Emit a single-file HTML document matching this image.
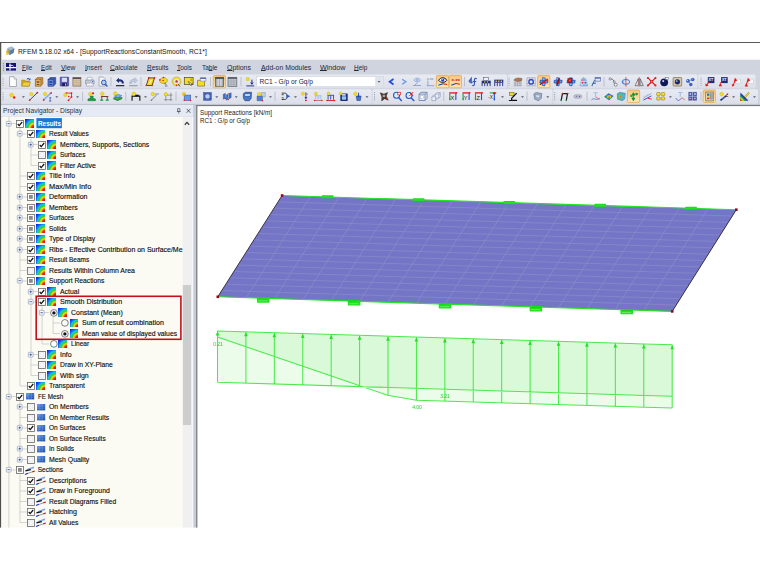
<!DOCTYPE html>
<html><head><meta charset="utf-8"><title>RFEM 5.18.02 x64 - [SupportReactionsConstantSmooth, RC1*]</title>
<style>
html,body{margin:0;padding:0;background:#fff;}
body{width:760px;height:570px;position:relative;overflow:hidden;font-family:"Liberation Sans",sans-serif;}
.a{position:absolute;}
.t{position:absolute;white-space:pre;transform-origin:0 50%;display:block;}
u{text-decoration:underline;text-decoration-thickness:0.5px;text-underline-offset:0.4px;}
.cb{position:absolute;width:6.4px;height:6.4px;border:0.7px solid #555;background:#fff;box-sizing:content-box;}
.ic{position:absolute;width:8.8px;height:8.8px;}
.res{background:radial-gradient(circle farthest-corner at 100% 100%,#dc0c0c 0%,#e82018 18%,#f6dc00 34%,#38cc30 48%,#10ccd0 61%,#1070f8 74%,#0828e8 92%,#0820d0 100%);}
svg{position:absolute;overflow:visible;}
</style></head><body>

<svg style="left:0;top:0" width="760" height="570" viewBox="0 0 760 570"><rect x="0.00" y="42.00" width="760.00" height="1.00" fill="#5a5a5a"/><rect x="0.00" y="42.00" width="1.25" height="485.60" fill="#505050"/><rect x="1.00" y="59.70" width="759.00" height="14.30" fill="#cfd4df"/><rect x="1.00" y="74.00" width="759.00" height="30.60" fill="#cfd4df"/><rect x="1.00" y="104.10" width="759.00" height="0.90" fill="#bcc1ce"/><rect x="1.00" y="105.00" width="195.00" height="11.40" fill="#e6eaf4"/><rect x="193.20" y="105.00" width="2.90" height="422.60" fill="#c5cbdb"/><rect x="1.00" y="116.20" width="192.20" height="0.60" fill="#cdd3e0"/><rect x="1.00" y="116.80" width="1.00" height="410.80" fill="#e4e8f2"/><rect x="2.00" y="116.80" width="180.60" height="410.80" fill="#fbfbf4"/><rect x="182.60" y="116.80" width="9.50" height="410.80" fill="#f0f0f0"/><rect x="192.10" y="116.80" width="1.10" height="410.80" fill="#f6f7fb"/><rect x="182.90" y="285.00" width="8.15" height="140.00" fill="#cdcdcd"/><rect x="196.10" y="105.00" width="1.30" height="422.60" fill="#7a7a7a"/><rect x="196.10" y="105.00" width="563.90" height="1.10" fill="#7a7a7a"/><rect x="36.40" y="118.10" width="25.50" height="10.10" fill="#1a77d4"/></svg>





<svg style="left:5px;top:46px" width="10" height="10" viewBox="0 0 10 10"><path d="M2.5 2.2 L6.5 0.6 L9.4 2.6 L8.6 6.8 L4.6 9 L1.6 7 Z" fill="#7c95b8"/><path d="M2.5 2.2 L6.5 0.6 L9.4 2.6 L5.4 4.4 Z" fill="#a9bcd6"/><path d="M5.4 4.4 L9.4 2.6 L8.6 6.8 L4.6 9 Z" fill="#5e7aa3"/><path d="M3.6 4.6 C1.6 4.2 0.8 6.2 2.6 6.6 C4 7 3.4 8.6 1.2 7.8" fill="none" stroke="#e8c020" stroke-width="1.3"/></svg>
<span class="t" style="left:17.80px;top:47.74px;font-size:6.6px;line-height:7.92px;color:#151515;transform:scaleX(1.0180);">RFEM 5.18.02 x64 - [SupportReactionsConstantSmooth, RC1*]</span>
<svg style="left:0;top:0" width="10" height="80"><path d="M3.4 63 v8.4" stroke="#7a8090" stroke-width="0.9" stroke-dasharray="0.9 0.9"/></svg>
<svg style="left:6.2px;top:63.2px" width="10" height="7.6" viewBox="0 0 10 7.6"><rect width="10" height="7.6" fill="#15156e"/><path d="M0 4.6 H10 M4 0.6 V7.6" stroke="#fff" stroke-width="1.1"/><path d="M3 2.4 H6.4 L7.6 3.4" stroke="#fff" stroke-width="0.9" fill="none"/></svg>
<span class="t" style="left:21.75px;top:64.10px;font-size:6.5px;line-height:7.80px;color:#22273a;transform:scaleX(0.9776);"><u>F</u>ile</span>
<span class="t" style="left:41.25px;top:64.10px;font-size:6.5px;line-height:7.80px;color:#22273a;transform:scaleX(0.9596);"><u>E</u>dit</span>
<span class="t" style="left:61.25px;top:64.10px;font-size:6.5px;line-height:7.80px;color:#22273a;transform:scaleX(1.0369);"><u>V</u>iew</span>
<span class="t" style="left:84.50px;top:64.10px;font-size:6.5px;line-height:7.80px;color:#22273a;transform:scaleX(1.0298);"><u>I</u>nsert</span>
<span class="t" style="left:110.00px;top:64.10px;font-size:6.5px;line-height:7.80px;color:#22273a;transform:scaleX(1.0218);"><u>C</u>alculate</span>
<span class="t" style="left:146.50px;top:64.10px;font-size:6.5px;line-height:7.80px;color:#22273a;transform:scaleX(0.9914);"><u>R</u>esults</span>
<span class="t" style="left:177.00px;top:64.10px;font-size:6.5px;line-height:7.80px;color:#22273a;transform:scaleX(0.9877);"><u>T</u>ools</span>
<span class="t" style="left:201.90px;top:64.10px;font-size:6.5px;line-height:7.80px;color:#22273a;">Ta<u>b</u>le</span>
<span class="t" style="left:227.30px;top:64.10px;font-size:6.5px;line-height:7.80px;color:#22273a;transform:scaleX(1.0689);"><u>O</u>ptions</span>
<span class="t" style="left:260.50px;top:64.10px;font-size:6.5px;line-height:7.80px;color:#22273a;transform:scaleX(1.0614);"><u>A</u>dd-on Modules</span>
<span class="t" style="left:320.00px;top:64.10px;font-size:6.5px;line-height:7.80px;color:#22273a;transform:scaleX(1.1027);"><u>W</u>indow</span>
<span class="t" style="left:354.25px;top:64.10px;font-size:6.5px;line-height:7.80px;color:#22273a;transform:scaleX(0.9907);"><u>H</u>elp</span>
<svg style="left:0;top:0" width="760" height="110" viewBox="0 0 760 110"><defs><linearGradient id="tbg" x1="0" y1="0" x2="0" y2="1"><stop offset="0" stop-color="#e8ebf2"/><stop offset="1" stop-color="#dcdfe9"/></linearGradient><linearGradient id="hlg" x1="0" y1="0" x2="0" y2="1"><stop offset="0" stop-color="#f8c682"/><stop offset="0.5" stop-color="#fbd797"/><stop offset="1" stop-color="#fdebb2"/></linearGradient></defs><rect x="1.5" y="74.4" width="505.5" height="13.799999999999997" rx="1.6" fill="url(#tbg)"/><rect x="508" y="74.4" width="189.39999999999998" height="13.799999999999997" rx="1.6" fill="url(#tbg)"/><rect x="698.3" y="74.4" width="57.30000000000007" height="13.799999999999997" rx="1.6" fill="url(#tbg)"/><rect x="1.5" y="89.2" width="370.1" height="14.599999999999994" rx="1.6" fill="url(#tbg)"/><rect x="372.6" y="89.2" width="179.79999999999995" height="14.599999999999994" rx="1.6" fill="url(#tbg)"/><rect x="553.4" y="89.2" width="204.60000000000002" height="14.599999999999994" rx="1.6" fill="url(#tbg)"/><rect x="256.8" y="76.5" width="126.4" height="10.2" fill="#fff" stroke="#c2c8d6" stroke-width="0.5"/><rect x="375.2" y="77" width="7.6" height="9.2" fill="#dfe3ec"/><path d="M377.50 81.10 h3 l-1.5 1.7 z" fill="#5a6070"/><path d="M3.00 77.60 v8.4" stroke="#8e94a4" stroke-width="0.9" stroke-dasharray="0.9 0.9"/><g transform="translate(8.40 77.10)"><path d="M1.2 -0.4 H5.6 L8 2 V9.4 H1.2 Z" fill="#fdfdfd" stroke="#8a8f98" stroke-width="0.7" /><path d="M5.6 -0.4 V2 H8" fill="#e8e8e8" stroke="#8a8f98" stroke-width="0.5" /></g><g transform="translate(21.50 77.10)"><path d="M0.2 3 H3.2 L4 4 H7.8 V9 H0.2 Z" fill="#d8b020" stroke="#907010" stroke-width="0.5" /><path d="M0.2 9 L1.8 5 H9 L7.8 9 Z" fill="#f0d040" stroke="#907010" stroke-width="0.5" /><path d="M5 2.2 C6 0.4 7.6 0.4 8.4 1.8 L9 1 V3.2 H6.8 L7.6 2.4 C7 1.6 6.2 1.6 5.6 2.6 Z" fill="#3060c0" /></g><g transform="translate(34.30 77.10)"><path d="M1 2.4 L3 0.4 H8.6 V6.6 L6.6 9 H1 Z" fill="#c89040" stroke="#805010" stroke-width="0.5" /><rect x="1" y="2.4" width="5.6" height="6.6" fill="#e0b060" stroke="#805010" stroke-width="0.4"/><rect x="2.4" y="4.2" width="2.6" height="1.4" fill="#704010" /><rect x="2.4" y="7" width="2.6" height="1" fill="#704010" /></g><g transform="translate(47.10 77.10)"><path d="M1 2.4 L3 0.4 H8.6 V6.6 L6.6 9 H1 Z" fill="#3858b0" stroke="#182870" stroke-width="0.5" /><rect x="1" y="2.4" width="5.6" height="6.6" fill="#6088d8" stroke="#182870" stroke-width="0.4"/><rect x="2.2" y="4.2" width="3" height="1.4" fill="#203890" /><rect x="2.2" y="7" width="3" height="1" fill="#203890" /></g><g transform="translate(59.80 77.10)"><rect x="0.4" y="0" width="8.4" height="9" fill="#5858c0" stroke="#303080" stroke-width="0.5" rx="0.5"/><rect x="2" y="0.6" width="5.2" height="4.2" fill="#d8dcf4" /><rect x="2.4" y="6" width="4.4" height="3" fill="#202050" /><rect x="5.2" y="6.5" width="1" height="2" fill="#c0c4e0" /></g><g transform="translate(72.30 77.10)"><rect x="0.6" y="0.4" width="8" height="8.6" fill="#d8c4a4" stroke="#6a5a48" stroke-width="0.6"/><rect x="0.6" y="0.4" width="8" height="1.5" fill="#5a5048" /><path d="M1.4 3.6 H7.8 M1.4 5.4 H7.8 M1.4 7.2 H7.8" fill="none" stroke="#b8a484" stroke-width="0.5" /></g><g transform="translate(85.20 77.10)"><path d="M2.4 0.2 H6.4 L7.2 3 H1.6 Z" fill="#fff" stroke="#8088a0" stroke-width="0.5" /><path d="M0.4 3 H8.8 L9 6.6 H0.2 Z" fill="#c8ccd8" stroke="#707890" stroke-width="0.5" /><path d="M1.6 6 H7.6 L8.2 9 H1 Z" fill="#f4f4fa" stroke="#8088a0" stroke-width="0.5" /><circle cx="7.4" cy="4.4" r="0.6" fill="#3060c0" /></g><g transform="translate(98.20 77.10)"><path d="M0.8 -0.2 H5 L7 1.8 V9 H0.8 Z" fill="#f0f0f0" stroke="#8a8f98" stroke-width="0.6" /><circle cx="5.6" cy="5.4" r="2.3" fill="#b8d0f0" stroke="#2858b8" stroke-width="1"/><path d="M7.2 7.2 L9.2 9.4" fill="none" stroke="#2858b8" stroke-width="1.3" /></g><path d="M111.00 77.00 v9.2" stroke="#aab0c0" stroke-width="0.7"/><g transform="translate(115.50 77.10)"><path d="M0.6 3.4 L3.4 0.6 V2.2 C6.8 2 8.6 4 8.4 6.4 H6.4 C6.4 4.8 5.4 4.2 3.4 4.4 V6 Z" fill="#1c2c78" /><path d="M0.4 8.6 H8.8" fill="none" stroke="#101020" stroke-width="1.1" /></g><g transform="translate(128.80 77.10)"><path d="M8.6 3.4 L5.8 0.6 V2.2 C2.4 2 0.6 4 0.8 6.4 H2.8 C2.8 4.8 3.8 4.2 5.8 4.4 V6 Z" fill="#c0cce0" stroke="#8898b8" stroke-width="0.4" /><path d="M0.4 8.6 H8.8" fill="none" stroke="#9098a8" stroke-width="1.1" /></g><path d="M141.00 77.00 v9.2" stroke="#aab0c0" stroke-width="0.7"/><g transform="translate(145.90 77.10)"><path d="M2.8 0.8 H8.6 L6.2 8.4 H0.4 Z" fill="#f4dc28" stroke="#302810" stroke-width="0.8" /><circle cx="2.8" cy="0.8" r="0.8" fill="#e01818" /><circle cx="8.6" cy="0.8" r="0.8" fill="#e01818" /><circle cx="6.2" cy="8.4" r="0.8" fill="#e01818" /><circle cx="0.4" cy="8.4" r="0.8" fill="#e01818" /><path d="M3.6 6 L5.6 3" fill="none" stroke="#fff" stroke-width="0.9" /></g><g transform="translate(158.90 77.10)"><path d="M1 3 C1.6 0 7 -0.4 8.2 2.6 C9 5 6.4 6.6 4.4 6.4 C2 6.2 0.4 5 1 3 Z" fill="#f4dc28" stroke="#a08000" stroke-width="0.6" /><circle cx="1" cy="2.8" r="0.8" fill="#e01818" /><circle cx="4.6" cy="0.4" r="0.8" fill="#e01818" /><circle cx="4.2" cy="3.4" r="0.8" fill="#e01818" /><path d="M6 5.6 L8.4 9 L7.2 8.8 L6.8 9.6 Z" fill="#fff" stroke="#303030" stroke-width="0.4" /></g><g transform="translate(172.10 77.10)"><circle cx="4.5" cy="4.3" r="3.6" fill="none" stroke="#f4dc28" stroke-width="1.7"/><circle cx="4.5" cy="4.3" r="4.5" fill="none" stroke="#a08000" stroke-width="0.4"/><circle cx="4.5" cy="4.3" r="1.2" fill="#e01818" /><path d="M6 6.8 L8 9.4" fill="none" stroke="#303030" stroke-width="0.7" /><circle cx="4.5" cy="8.2" r="0.7" fill="#e01818" /></g><g transform="translate(184.10 77.10)"><rect x="0.2" y="0.4" width="8.8" height="7" fill="#f4dc28" stroke="#4a4420" stroke-width="0.7"/><path d="M4 4.4 L7 8.8 L7.2 7 L8.8 7 Z" fill="#fff" stroke="#202020" stroke-width="0.5" /><path d="M7 1.4 V4" fill="none" stroke="#5a4a10" stroke-width="0.6" /></g><g transform="translate(197.10 77.10)"><path d="M0.4 3.2 H7.4 V9 H0.4 Z" fill="#f4dc28" stroke="#706010" stroke-width="0.6" /><path d="M3.2 0.6 H8.8 V4 H3.2 Z" fill="#f8f8ff" stroke="#606880" stroke-width="0.5" /><rect x="3.2" y="0.6" width="5.6" height="1.2" fill="#4060b0" /></g><path d="M210.50 77.00 v9.2" stroke="#aab0c0" stroke-width="0.7"/><rect x="213.30" y="75.40" width="12.2" height="12.4" rx="1" fill="url(#hlg)" stroke="#e2a446" stroke-width="0.7"/><g transform="translate(214.90 77.10)"><rect x="0.4" y="0.2" width="8.4" height="9" fill="#a8acb4" stroke="#484c54" stroke-width="0.7"/><rect x="0.4" y="0.2" width="8.4" height="1.6" fill="#484c54" /><path d="M3.2 1.8 V9.2 M6 1.8 V9.2" fill="none" stroke="#f4f4f4" stroke-width="0.9" /></g><g transform="translate(227.80 77.10)"><rect x="0.2" y="0.2" width="8.8" height="9" fill="#c4c8d0" stroke="#585c64" stroke-width="0.7"/><rect x="0.2" y="0.2" width="8.8" height="1.6" fill="#585c64" /><path d="M0.2 3.8 H9 M0.2 5.6 H9 M0.2 7.4 H9 M3.2 1.8 V9.2 M6 1.8 V9.2" fill="none" stroke="#8c9098" stroke-width="0.4" /></g><path d="M241.00 77.00 v9.2" stroke="#aab0c0" stroke-width="0.7"/><g transform="translate(245.30 77.10)"><circle cx="2.4" cy="2" r="1.7" fill="#f4dc28" stroke="#c8a800" stroke-width="0.4"/><path d="M6.6 2.6 V7 M5.4 5.4 L6.6 7.2 L7.8 5.4" fill="none" stroke="#1c2c78" stroke-width="1" /><path d="M1 8.8 H8.8" fill="none" stroke="#1c2c78" stroke-width="0.9" /></g><g transform="translate(386.70 77.10)"><path d="M6.8 2 L3 4.7 L6.8 7.4" fill="none" stroke="#2a50d8" stroke-width="1.9" /></g><g transform="translate(399.20 77.10)"><path d="M3 2.2 L6.6 4.7 L3 7.2" fill="none" stroke="#6a98ec" stroke-width="1.4" /></g><g transform="translate(412.50 77.10)"><path d="M1.4 3 C3 0.4 6.4 0.4 8 3 C6.4 5.2 3 5.2 1.4 3 Z" fill="#d8e4f4" stroke="#7090c8" stroke-width="0.7" /><circle cx="4.7" cy="2.9" r="1.1" fill="#88a8d8" /><path d="M0.6 8.4 H8.6 M2 8.2 L5 5.6" fill="none" stroke="#8098c8" stroke-width="0.8" /></g><g transform="translate(425.50 77.10)"><text x="1.4" y="2.8" font-size="3.6" fill="#707888" font-family="Liberation Sans,sans-serif" >x.xx</text><path d="M1.2 8.6 H8.8 M2.4 3.4 V8.6" fill="none" stroke="#8098c8" stroke-width="0.8" /></g><rect x="436.40" y="75.40" width="12.2" height="12.4" rx="1" fill="url(#hlg)" stroke="#e2a446" stroke-width="0.7"/><g transform="translate(438.00 77.10)"><path d="M0.6 3.2 C2.6 -0.2 6.8 -0.2 8.8 3.2 C6.8 6 2.6 6 0.6 3.2 Z" fill="#f4f4ff" stroke="#10142c" stroke-width="1" /><circle cx="4.7" cy="3" r="1.7" fill="#1c48c0" /><circle cx="4.2" cy="2.5" r="0.5" fill="#fff" /><path d="M0.4 8.2 L5 6.6" fill="none" stroke="#2040c0" stroke-width="1.1" /><path d="M5 6.6 L9 7.4" fill="none" stroke="#e01818" stroke-width="1.1" /></g><rect x="449.30" y="75.40" width="12.2" height="12.4" rx="1" fill="url(#hlg)" stroke="#e2a446" stroke-width="0.7"/><g transform="translate(450.90 77.10)"><text x="0.6" y="3.6" font-size="4.4" fill="#b01010" font-family="Liberation Sans,sans-serif" font-weight="bold">x.xx</text><path d="M0.4 8.2 L5 6.4" fill="none" stroke="#2040c0" stroke-width="1.1" /><path d="M5 6.4 L9 7.2" fill="none" stroke="#e01818" stroke-width="1.1" /></g><path d="M464.50 77.00 v9.2" stroke="#aab0c0" stroke-width="0.7"/><g transform="translate(468.20 77.10)"><path d="M0.6 4.6 L3 1.2 V6.4 M1 5 H4.6 M8.6 1.6 C6.6 0.4 6.2 2 6.2 4 V7 C6.2 8.6 5 8.8 4.2 8 M4.8 4.4 H8" fill="none" stroke="#3858b8" stroke-width="1.2" /></g><g transform="translate(481.50 77.10)"><rect x="0.2" y="3.6" width="9" height="2.6" fill="#1c2c78" /><path d="M0.6 6 V9 M3.2 6 V9 M5.8 6 V9 M8.6 6 V9" fill="none" stroke="#1c2c78" stroke-width="0.9" /><rect x="2" y="0.6" width="5" height="2.6" fill="#f0f0f8" stroke="#404860" stroke-width="0.5"/><rect x="2.6" y="4.2" width="1.2" height="1.2" fill="#f4dc28" /><rect x="5.4" y="4.2" width="1.2" height="1.2" fill="#f4dc28" /></g><g transform="translate(494.10 77.10)"><rect x="0.2" y="2.6" width="9" height="3" fill="#1c2c78" /><path d="M0.6 5.4 V9 M3.2 5.4 V9 M5.8 5.4 V9 M8.6 5.4 V9" fill="none" stroke="#1c2c78" stroke-width="0.9" /><rect x="1.4" y="3.4" width="1.4" height="1.4" fill="#f4dc28" /><rect x="4" y="3.4" width="1.4" height="1.4" fill="#f4dc28" /><rect x="6.6" y="3.4" width="1.4" height="1.4" fill="#f4dc28" /></g><path d="M509.00 77.60 v8.4" stroke="#8e94a4" stroke-width="0.9" stroke-dasharray="0.9 0.9"/><g transform="translate(513.20 77.10)"><path d="M0.4 5 H8.8 M0.4 6.8 H8.8 M0.4 8.6 H8.8 M2 4.4 V9 M4.4 4.4 V9 M6.8 4.4 V9" fill="none" stroke="#9094a0" stroke-width="0.6" /><path d="M0.6 3 C2 0.8 5 0.4 8.8 1.4 L8.4 3.6 C6 4.6 2.4 4.6 0.6 3 Z" fill="#b07850" stroke="#604028" stroke-width="0.4" /></g><g transform="translate(526.50 77.10)"><path d="M0.4 0.6 H8.8 V8.8 H0.4 Z M0.4 3 H8.8 M0.4 6.4 H8.8 M2.8 0.6 V8.8 M6.4 0.6 V8.8" fill="none" stroke="#9aa0ac" stroke-width="0.6" /><circle cx="4.6" cy="4.7" r="2.3" fill="none" stroke="#2848c8" stroke-width="1.3"/></g><rect x="537.70" y="75.40" width="12.2" height="12.4" rx="1" fill="url(#hlg)" stroke="#e2a446" stroke-width="0.7"/><g transform="translate(539.30 77.10)"><path d="M3.2 0.4 L6 0.8 L6.2 2.8 L8.8 3.2 L8.4 6 L6 6.2 L5.6 8.8 L2.8 8.4 L2.8 6.2 L0.4 5.8 L0.8 3 L3 2.8 Z" fill="#2a68d6" stroke="#1a3c98" stroke-width="0.4" /><rect x="3.4" y="1.2" width="2" height="1.6" fill="#86c2f6" /><rect x="1.2" y="3.6" width="1.6" height="1.6" fill="#5aa0ee" /><rect x="6.2" y="3.8" width="1.6" height="1.6" fill="#5aa0ee" /><rect x="3.4" y="6.4" width="1.8" height="1.6" fill="#86c2f6" /><path d="M0.8 7.4 L8.6 2" fill="none" stroke="#d01818" stroke-width="1.2" /><circle cx="4.6" cy="4.8" r="1.2" fill="#e01818" /><path d="M0.4 7.6 L2.4 6.4" fill="none" stroke="#700808" stroke-width="0.8" /></g><g transform="translate(553.50 77.10)"><path d="M3.2 0.4 L6 0.8 L6.2 2.8 L8.8 3.2 L8.4 6 L6 6.2 L5.6 8.8 L2.8 8.4 L2.8 6.2 L0.4 5.8 L0.8 3 L3 2.8 Z" fill="#2a68d6" stroke="#1a3c98" stroke-width="0.4" /><rect x="3.4" y="1.2" width="2" height="1.6" fill="#86c2f6" /><rect x="1.2" y="3.6" width="1.6" height="1.6" fill="#5aa0ee" /><rect x="6.2" y="3.8" width="1.6" height="1.6" fill="#5aa0ee" /><rect x="3.4" y="6.4" width="1.8" height="1.6" fill="#86c2f6" /><ellipse cx="4.6" cy="4.6" rx="1.3" ry="3.4" fill="#d81818" transform="rotate(18 4.6 4.6)"/><path d="M3.4 8.6 L5.8 0.8" fill="none" stroke="#600808" stroke-width="0.7" /></g><g transform="translate(566.50 77.10)"><path d="M3.2 0.4 L6 0.8 L6.2 2.8 L8.8 3.2 L8.4 6 L6 6.2 L5.6 8.8 L2.8 8.4 L2.8 6.2 L0.4 5.8 L0.8 3 L3 2.8 Z" fill="#2a68d6" stroke="#1a3c98" stroke-width="0.4" /><rect x="3.4" y="1.2" width="2" height="1.6" fill="#86c2f6" /><rect x="1.2" y="3.6" width="1.6" height="1.6" fill="#5aa0ee" /><rect x="6.2" y="3.8" width="1.6" height="1.6" fill="#5aa0ee" /><rect x="3.4" y="6.4" width="1.8" height="1.6" fill="#86c2f6" /><rect x="1.4" y="1.4" width="4" height="4" fill="#d81818" stroke="#700808" stroke-width="0.5"/><rect x="2.6" y="2.6" width="1.6" height="1.6" fill="#ff5a4a" /></g><g transform="translate(579.00 77.10)"><path d="M0.8 9 L2.6 1.6 L4.6 0.6 L4.8 9 Z" fill="#a4d0f0" stroke="#5c98c8" stroke-width="0.4" /><path d="M4.8 9 L4.6 0.6 L7 2 L8.8 9 Z" fill="#84bce8" stroke="#5c98c8" stroke-width="0.4" /><path d="M2 4.6 H8 M1.4 6.8 H8.4" fill="none" stroke="#e4f2fc" stroke-width="0.5" /><circle cx="3.4" cy="5.6" r="0.8" fill="#e01818" /><circle cx="6.4" cy="5.6" r="0.8" fill="#e01818" /><circle cx="3.2" cy="3" r="0.6" fill="#e01818" /></g><g transform="translate(591.30 77.10)"><rect x="3.8" y="0.4" width="5.2" height="3.6" fill="#e4e8f4" stroke="#40589c" stroke-width="0.6"/><rect x="3.8" y="0.4" width="5.2" height="1.2" fill="#5070b8" /><path d="M3.8 3.2 C2 3.6 3 5.6 1.6 6.4 L0.6 9 M1.6 6.4 L4.6 6" fill="none" stroke="#4868b0" stroke-width="1.1" /></g><path d="M604.00 77.00 v9.2" stroke="#aab0c0" stroke-width="0.7"/><g transform="translate(608.50 77.10)"><path d="M1.8 1.8 C4.6 1.6 5.4 3.6 5.8 5.4 L7 7.4" fill="none" stroke="#50545c" stroke-width="0.7" /><circle cx="1.6" cy="1.8" r="1.1" fill="#fff" stroke="#50545c" stroke-width="0.6"/><circle cx="5.8" cy="4.8" r="1" fill="#fff" stroke="#50545c" stroke-width="0.6"/><circle cx="7.2" cy="7.6" r="1.5" fill="#f4f4f8" stroke="#50545c" stroke-width="0.6"/></g><g transform="translate(621.30 77.10)"><ellipse cx="4.6" cy="4.8" rx="3.8" ry="2.4" fill="none" stroke="#3878d8" stroke-width="1"/><path d="M4.6 0 V9.6" fill="none" stroke="#e01818" stroke-width="0.7" /><path d="M1.6 6.4 L0.6 4.4 L2.6 4.6 Z" fill="#3878d8" /></g><g transform="translate(634.50 77.10)"><path d="M3.8 1.6 L0.6 8.6 H3.8 Z" fill="#f4f4f4" stroke="#50545c" stroke-width="0.7" /><path d="M5.6 1.6 L8.8 8.6 H5.6 Z" fill="#dcdce0" stroke="#50545c" stroke-width="0.7" /><path d="M4.7 0 V9.6" fill="none" stroke="#e01818" stroke-width="0.7" /></g><g transform="translate(647.10 77.10)"><path d="M0.8 0.8 L8.4 8.4 M8.4 0.8 L0.8 8.4" fill="none" stroke="#e01818" stroke-width="1.1" /><circle cx="0.8" cy="0.8" r="1" fill="#e01818" /><circle cx="8.4" cy="0.8" r="1" fill="#e01818" /><circle cx="0.8" cy="8.4" r="1" fill="#e01818" /><circle cx="8.4" cy="8.4" r="1" fill="#e01818" /><rect x="3.4" y="3.4" width="2.4" height="2.4" fill="#ff6060" stroke="#b00000" stroke-width="0.4"/></g><g transform="translate(659.80 77.10)"><circle cx="4.4" cy="5.2" r="3.9" fill="#101858" /><circle cx="3.4" cy="4" r="1.1" fill="#c0c8f0" /><rect x="5.4" y="0.2" width="3.4" height="2.2" fill="#f4f4fc" stroke="#303860" stroke-width="0.4"/></g><g transform="translate(672.70 77.10)"><rect x="0.4" y="0.4" width="8.6" height="8.6" fill="#d8c8a8" stroke="#6a5a48" stroke-width="0.6" rx="0.8"/><circle cx="4.7" cy="4.7" r="2.6" fill="#182868" /><circle cx="4" cy="4" r="0.9" fill="#a8b8e8" /></g><g transform="translate(685.80 77.10)"><path d="M2.2 3.8 L6.8 2.4 M2.2 3.8 L5 7.4" fill="none" stroke="#5070b0" stroke-width="0.7" /><circle cx="2.2" cy="3.8" r="1.9" fill="#3860c8" /><circle cx="6.9" cy="2.4" r="1.8" fill="#3860c8" /><circle cx="5" cy="7.4" r="1.7" fill="#3860c8" /><circle cx="1.7" cy="3.3" r="0.6" fill="#c0d0f8" /><circle cx="6.4" cy="1.9" r="0.6" fill="#c0d0f8" /></g><path d="M701.00 77.60 v8.4" stroke="#8e94a4" stroke-width="0.9" stroke-dasharray="0.9 0.9"/><g transform="translate(705.20 77.10)"><rect x="2.6" y="0" width="6.6" height="6" fill="#1c2c78" /><text x="3.4" y="4.4" font-size="3.6" fill="#fff" font-family="Liberation Sans,sans-serif" font-weight="bold">XT</text><path d="M4 4.6 L1 8.4" fill="none" stroke="#e01818" stroke-width="1.1" /><path d="M0 6.4 L0.6 9.4 L3.4 8.4 Z" fill="#e01818" /></g><g transform="translate(718.50 77.10)"><rect x="2.6" y="0" width="6.6" height="6" fill="#1c2c78" /><text x="3.4" y="4.4" font-size="3.6" fill="#fff" font-family="Liberation Sans,sans-serif" font-weight="bold">XT</text><path d="M0.2 9.2 L1.8 5.6 L3.6 9.2 Z" fill="#e01818" /><path d="M1.8 6 L3.4 4.4" fill="none" stroke="#e01818" stroke-width="1" /></g><g transform="translate(731.50 77.10)"><rect x="3.8" y="2" width="5" height="4.6" fill="#fafafa" stroke="#b0b4c0" stroke-width="0.4"/><path d="M3.4 0.6 L5.8 3.4 L2.2 5 Z" fill="#e01818" /><path d="M3.6 4 L1.6 8" fill="none" stroke="#e01818" stroke-width="1" /><path d="M0.2 6.8 L1 9.6 L3.2 8 Z" fill="#e01818" /></g><g transform="translate(744.50 77.10)"><rect x="3.8" y="2" width="5" height="4.6" fill="#fafafa" stroke="#b0b4c0" stroke-width="0.4"/><path d="M3.4 0.6 L5.8 3.4 L2.2 5 Z" fill="#e01818" /><path d="M3.4 4 L1.8 7" fill="none" stroke="#e01818" stroke-width="1" /><path d="M0.2 9.4 L1.8 6 L3.6 9.4 Z" fill="#e01818" /></g><path d="M3.00 92.20 v8.4" stroke="#8e94a4" stroke-width="0.9" stroke-dasharray="0.9 0.9"/><g transform="translate(8.20 91.70)"><circle cx="3.4" cy="3.4" r="1.9" fill="#f4dc28" stroke="#c8a800" stroke-width="0.4"/><circle cx="6" cy="5.8" r="1.2" fill="#e01818" /></g><path d="M21.90 96.30 h3 l-1.5 1.7 z" fill="#5a6070"/><g transform="translate(28.90 91.70)"><path d="M0.8 8.4 L8.4 1" fill="none" stroke="#202020" stroke-width="0.8" /><circle cx="0.8" cy="8.4" r="0.9" fill="#e01818" /><circle cx="8.4" cy="1" r="0.9" fill="#e01818" /><circle cx="2.4" cy="2.4" r="1.7" fill="#f4dc28" stroke="#c8a800" stroke-width="0.4"/></g><g transform="translate(42.90 91.70)"><path d="M0.8 8 L8 1.4" fill="none" stroke="#8cb4e8" stroke-width="1.8" /><circle cx="0.8" cy="8.2" r="0.9" fill="#e01818" /><circle cx="8.2" cy="1.2" r="0.9" fill="#e01818" /><circle cx="2.2" cy="2.2" r="1.7" fill="#f4dc28" stroke="#c8a800" stroke-width="0.4"/><path d="M6.2 6 H8.4 M7.3 6 V9.4 M6.2 9.4 H8.4" fill="none" stroke="#2848b0" stroke-width="0.7" /></g><path d="M55.30 96.30 h3 l-1.5 1.7 z" fill="#5a6070"/><g transform="translate(63.50 91.70)"><path d="M2.8 1.4 H8 V5.2 L5 8.6" fill="none" stroke="#e01818" stroke-width="0.8" /><circle cx="2.8" cy="1.4" r="0.9" fill="#e01818" /><circle cx="8" cy="1.4" r="0.9" fill="#e01818" /><circle cx="8" cy="5.2" r="0.9" fill="#e01818" /><circle cx="5" cy="8.6" r="0.9" fill="#e01818" /><circle cx="5.2" cy="4.8" r="0.8" fill="#e01818" /><circle cx="1.8" cy="3.2" r="1.7" fill="#f4dc28" stroke="#c8a800" stroke-width="0.4"/></g><path d="M76.10 96.30 h3 l-1.5 1.7 z" fill="#5a6070"/><path d="M82.60 91.60 v9.2" stroke="#aab0c0" stroke-width="0.7"/><g transform="translate(86.90 91.70)"><path d="M3.2 4.4 H6.4 L6 6.4 L8.6 7.4 V9 H1 V7.4 L3.6 6.4 Z" fill="#18a040" stroke="#0c6028" stroke-width="0.4" /><circle cx="3.4" cy="2.4" r="1.8" fill="#f4dc28" stroke="#c8a800" stroke-width="0.4"/><circle cx="6.2" cy="1.6" r="1.1" fill="#e01818" /></g><g transform="translate(99.90 91.70)"><path d="M1.2 4.8 H8.4" fill="none" stroke="#202020" stroke-width="0.8" /><path d="M0 9 L1.8 6 L3.6 9 Z" fill="#18a040" /><path d="M5.6 9 L7.4 6 L9.2 9 Z" fill="#18a040" /><circle cx="1.8" cy="5.2" r="0.9" fill="#e01818" /><circle cx="7.4" cy="5.2" r="0.9" fill="#e01818" /><circle cx="2.4" cy="2" r="1.8" fill="#f4dc28" stroke="#c8a800" stroke-width="0.4"/></g><g transform="translate(113.00 91.70)"><path d="M0.4 6.4 L5 4.4 L9.2 6 L4.6 8.2 Z" fill="#48a848" stroke="#106020" stroke-width="0.4" /><path d="M0.4 6.4 V7.6 L4.6 9.4 L9.2 7.2 V6 L4.6 8.2 Z" fill="#208838" /><path d="M1.2 4.4 L5.4 2.6 L9 4 L4.8 6 Z" fill="#78b0e8" stroke="#2858a8" stroke-width="0.4" /><circle cx="2.2" cy="1.8" r="1.7" fill="#f4dc28" stroke="#c8a800" stroke-width="0.4"/></g><path d="M125.75 91.60 v9.2" stroke="#aab0c0" stroke-width="0.7"/><g transform="translate(131.25 91.70)"><path d="M0.8 9 V4.4 H8.6 V9" fill="none" stroke="#101010" stroke-width="1.1" /><rect x="3.4" y="3" width="4" height="1.6" fill="#101010" /><circle cx="2.6" cy="2.2" r="1.8" fill="#f4dc28" stroke="#c8a800" stroke-width="0.4"/></g><path d="M144.00 96.30 h3 l-1.5 1.7 z" fill="#5a6070"/><g transform="translate(150.50 91.70)"><path d="M0.8 8.6 L6 3.4" fill="none" stroke="#70747c" stroke-width="0.9" /><circle cx="2.4" cy="2.4" r="1.8" fill="#f4dc28" stroke="#c8a800" stroke-width="0.4"/><text x="4.6" y="3" font-size="3.6" fill="#60646c" font-family="Liberation Sans,sans-serif" >xx</text><circle cx="0.9" cy="8.5" r="0.8" fill="#70747c" /></g><g transform="translate(163.25 91.70)"><path d="M2.6 1 V9.4 M7.6 1 V9.4 M1 3.4 H9.2 M1 8 H9.2" fill="none" stroke="#80848c" stroke-width="0.8" /><circle cx="2.6" cy="2.6" r="1.7" fill="#f4dc28" stroke="#c8a800" stroke-width="0.4"/></g><path d="M176.00 91.60 v9.2" stroke="#aab0c0" stroke-width="0.7"/><g transform="translate(181.75 91.70)"><rect x="2.4" y="3.4" width="6.6" height="5.4" fill="#6898e0" stroke="#2050a8" stroke-width="0.5"/><circle cx="2.2" cy="2.2" r="1.7" fill="#f4dc28" stroke="#c8a800" stroke-width="0.4"/><circle cx="8.8" cy="8.8" r="0.8" fill="#e01818" /><circle cx="2.4" cy="8.6" r="0.7" fill="#e01818" /><path d="M2.4 3.4 V2.2" fill="none" stroke="#e01818" stroke-width="0.6" /></g><path d="M194.75 96.30 h3 l-1.5 1.7 z" fill="#5a6070"/><g transform="translate(203.00 91.70)"><rect x="0.6" y="0.8" width="7.8" height="7.8" fill="#3c68c0" stroke="#183880" stroke-width="0.4"/><rect x="2.4" y="2.6" width="4.2" height="4.2" fill="#b8cef2" /><circle cx="2.4" cy="2.6" r="0.8" fill="#e01818" /><circle cx="6.6" cy="2.6" r="0.8" fill="#e01818" /><circle cx="2.4" cy="6.8" r="0.8" fill="#e01818" /><circle cx="6.6" cy="6.8" r="0.8" fill="#e01818" /></g><path d="M215.25 96.30 h3 l-1.5 1.7 z" fill="#5a6070"/><g transform="translate(222.40 91.70)"><path d="M0.8 2.6 L3 1.6 V6.6 L0.8 7.6 Z" fill="#4070c8" stroke="#183880" stroke-width="0.3" /><path d="M3.8 3.2 L5.8 2.2 V7.6 L3.8 8.6 Z" fill="#4070c8" stroke="#183880" stroke-width="0.3" /><path d="M6.6 2 L8.8 1 V6 L6.6 7 Z" fill="#4070c8" stroke="#183880" stroke-width="0.3" /><circle cx="3" cy="6.8" r="0.7" fill="#e01818" /><circle cx="5.8" cy="7.8" r="0.7" fill="#e01818" /><circle cx="6.6" cy="1.8" r="0.6" fill="#e01818" /></g><path d="M234.75 96.30 h3 l-1.5 1.7 z" fill="#5a6070"/><g transform="translate(242.75 91.70)"><path d="M0.6 2 L2.6 0.6 H8.8 L8.4 6.6 L6.6 9 H2.2 L0.6 6.4 Z" fill="#4878c8" stroke="#183070" stroke-width="0.6" /><path d="M2 2.4 H7.6 L7.2 4.4 H2.2 Z" fill="#e8f0fc" stroke="#183070" stroke-width="0.3" /></g><g transform="translate(256.50 91.70)"><path d="M0.6 4.2 H6 V9 H0.6 Z" fill="#5080d0" stroke="#204090" stroke-width="0.4" /><path d="M5 0.8 H8.8 V5 H6 V4.2 H5 Z" fill="#c8ccd8" stroke="#70788c" stroke-width="0.4" /><circle cx="2.6" cy="2.4" r="1.7" fill="#f4dc28" stroke="#c8a800" stroke-width="0.4"/><circle cx="6" cy="9" r="0.7" fill="#e01818" /></g><path d="M269.00 96.30 h3 l-1.5 1.7 z" fill="#5a6070"/><path d="M275.00 91.60 v9.2" stroke="#aab0c0" stroke-width="0.7"/><g transform="translate(281.10 91.70)"><path d="M0.6 1.4 H3.2 C5.6 1.4 6 2.6 6 4.6 C6 6.8 5.4 7.8 3.2 7.8 H0.6 M0.6 3 H2.6 M0.6 6.2 H2.6" fill="none" stroke="#303030" stroke-width="0.9" /><path d="M5.4 2.6 L9.2 4.6 L5.4 6.6 Z" fill="#2060d8" /></g><path d="M294.00 96.30 h3 l-1.5 1.7 z" fill="#5a6070"/><g transform="translate(300.50 91.70)"><circle cx="2.4" cy="2" r="1.6" fill="#f4dc28" stroke="#c8a800" stroke-width="0.4"/><path d="M5.4 0.6 V6.6" fill="none" stroke="#2040c0" stroke-width="0.9" /><path d="M4 5.4 L5.4 7.8 L6.8 5.4 Z" fill="#2040c0" /><circle cx="5.4" cy="8.6" r="0.9" fill="#e01818" /><circle cx="6.6" cy="2.4" r="0.6" fill="#e01818" /></g><g transform="translate(313.50 91.70)"><path d="M1.4 4 H8 M2 4 V8 M4.6 4 V8 M7.4 4 V8" fill="none" stroke="#9cbcec" stroke-width="0.8" /><path d="M0.8 8.8 H8.6" fill="none" stroke="#c06060" stroke-width="0.8" /><circle cx="2.4" cy="2" r="1.5" fill="#f4dc28" stroke="#c8a800" stroke-width="0.4"/><circle cx="1" cy="8.8" r="0.7" fill="#e01818" /><circle cx="8.4" cy="8.8" r="0.7" fill="#e01818" /><text x="3" y="7.6" font-size="4.6" fill="#a8c4ec" font-family="Liberation Sans,sans-serif" >m</text></g><g transform="translate(326.10 91.70)"><path d="M1.4 3.6 H8 M2 3.6 V8 M4.6 3.6 V8 M7.4 3.6 V8" fill="none" stroke="#2848b8" stroke-width="0.9" /><path d="M0.8 8.8 H8.6" fill="none" stroke="#e01818" stroke-width="0.9" /><circle cx="2.4" cy="1.8" r="1.5" fill="#f4dc28" stroke="#c8a800" stroke-width="0.4"/><circle cx="1" cy="8.8" r="0.8" fill="#e01818" /><circle cx="8.4" cy="8.8" r="0.8" fill="#e01818" /></g><g transform="translate(338.90 91.70)"><rect x="1.4" y="1.8" width="7.4" height="7.4" fill="#1c2c78" rx="0.6"/><rect x="3" y="4.6" width="4.2" height="3.4" fill="#98c8f0" /><rect x="3.2" y="2.4" width="3.6" height="1.6" fill="#d8e4f8" /><circle cx="1.8" cy="1.8" r="1.5" fill="#f4dc28" stroke="#c8a800" stroke-width="0.4"/></g><g transform="translate(352.75 91.70)"><path d="M3.4 4.4 H8.4 L7.6 8.8 H4.2 Z" fill="#4878c8" stroke="#183070" stroke-width="0.5" /><path d="M5.8 1 V5" fill="none" stroke="#2040b0" stroke-width="0.9" /><path d="M4.6 4 L5.8 6 L7 4 Z" fill="#2040b0" /><circle cx="2.6" cy="2" r="1.7" fill="#f4dc28" stroke="#c8a800" stroke-width="0.4"/></g><path d="M365.50 96.30 h3 l-1.5 1.7 z" fill="#5a6070"/><path d="M374.50 92.20 v8.4" stroke="#8e94a4" stroke-width="0.9" stroke-dasharray="0.9 0.9"/><g transform="translate(379.25 91.70)"><path d="M1 1 L4.6 2.4 L8.4 0.8 L7 4.4 L9 8.6 L5.4 7 L2.4 9.2 L2.6 5.4 Z" fill="#4a3c34" stroke="#201810" stroke-width="0.4" /><rect x="3.4" y="3" width="2.4" height="2.4" fill="#b0a090" /><circle cx="7.6" cy="7.6" r="0.8" fill="#e01818" /></g><g transform="translate(392.75 91.70)"><circle cx="3.8" cy="3.6" r="3" fill="#e4ecfc" stroke="#2858c0" stroke-width="1.1"/><path d="M6 6 L9 9.2" fill="none" stroke="#2858c0" stroke-width="1.4" /><rect x="5" y="0.6" width="2.6" height="2.6" fill="#fff" stroke="#e01818" stroke-width="0.7"/></g><g transform="translate(405.25 91.70)"><circle cx="3.8" cy="3.8" r="3" fill="#e4ecfc" stroke="#2858c0" stroke-width="1.1"/><path d="M6 6.2 L9 9.2" fill="none" stroke="#2858c0" stroke-width="1.4" /><path d="M4 0.4 L8 4.4 M8 0.4 L4 4.4" fill="none" stroke="#e01818" stroke-width="1" /></g><g transform="translate(418.25 91.70)"><path d="M0.8 2.4 L2.8 0.6 H8.8 V6.6 L6.8 8.8 H0.8 Z M0.8 2.4 H6.8 V8.8 M6.8 2.4 L8.8 0.6" fill="#e8ecf6" stroke="#6078a8" stroke-width="0.8" /><rect x="2.4" y="3.8" width="3" height="3.2" fill="#fff" stroke="#90a0c0" stroke-width="0.4"/></g><g transform="translate(431.25 91.70)"><path d="M0.6 5 L2 3.6 H5.6 V7.6 L4.2 9 H0.6 Z M0.6 5 H4.2 V9 M4.2 5 L5.6 3.6" fill="#eef0f8" stroke="#8090b8" stroke-width="0.6" /><path d="M4 2.4 L5.4 1 H9 V5 L7.6 6.4 H5.6 M4 2.4 H7.6 V6.4 M7.6 2.4 L9 1 M4 2.4 V3.6" fill="#eef0f8" stroke="#8090b8" stroke-width="0.6" /></g><path d="M443.75 91.60 v9.2" stroke="#aab0c0" stroke-width="0.7"/><g transform="translate(448.25 91.70)"><path d="M1 1.2 H8.4" fill="none" stroke="#e01818" stroke-width="1.3" /><path d="M1.6 1.6 V8" fill="none" stroke="#18a040" stroke-width="1.1" /><path d="M7.6 1.6 V8.4" fill="none" stroke="#2050d0" stroke-width="1.1" /><path d="M0.6 6.8 L1.6 9 L2.6 6.8 Z" fill="#18a040" /><circle cx="8.2" cy="1.2" r="0.8" fill="#e01818" /><text x="4.2" y="8.8" font-size="5.6" fill="#202020" font-family="Liberation Sans,sans-serif" text-anchor="middle">X</text></g><g transform="translate(461.50 91.70)"><path d="M1 1.2 H8.4" fill="none" stroke="#e01818" stroke-width="1.3" /><path d="M1.6 1.6 V8" fill="none" stroke="#18a040" stroke-width="1.1" /><path d="M7.6 1.6 V8.4" fill="none" stroke="#2050d0" stroke-width="1.1" /><path d="M0.6 6.8 L1.6 9 L2.6 6.8 Z" fill="#18a040" /><circle cx="8.2" cy="1.2" r="0.8" fill="#e01818" /><text x="4.2" y="8.8" font-size="5.6" fill="#202020" font-family="Liberation Sans,sans-serif" text-anchor="middle">Y</text></g><g transform="translate(473.90 91.70)"><path d="M1 1.2 H8.4" fill="none" stroke="#e01818" stroke-width="1.3" /><path d="M1.6 1.6 V8" fill="none" stroke="#18a040" stroke-width="1.1" /><path d="M7.6 1.6 V8.4" fill="none" stroke="#2050d0" stroke-width="1.1" /><path d="M0.6 6.8 L1.6 9 L2.6 6.8 Z" fill="#18a040" /><circle cx="8.2" cy="1.2" r="0.8" fill="#e01818" /><text x="4.2" y="8.8" font-size="5.6" fill="#202020" font-family="Liberation Sans,sans-serif" text-anchor="middle">Z</text></g><g transform="translate(487.75 91.70)"><path d="M2 1.2 H8.6" fill="none" stroke="#18a040" stroke-width="1.1" /><circle cx="6.6" cy="1.6" r="1.2" fill="#e01818" /><path d="M6.6 2 V8" fill="none" stroke="#2050d0" stroke-width="1.1" /><path d="M5.6 7 L6.6 9.2 L7.6 7 Z" fill="#2050d0" /><text x="2.8" y="7.6" font-size="4.6" fill="#202020" font-family="Liberation Sans,sans-serif" text-anchor="middle">-X</text></g><path d="M501.00 96.30 h3 l-1.5 1.7 z" fill="#5a6070"/><g transform="translate(508.25 91.70)"><rect x="1.2" y="0.6" width="4.6" height="3.2" fill="#f4dc28" stroke="#605810" stroke-width="0.5"/><path d="M8.4 1.4 L3.4 6.6 V8.6 H8.6 M0.6 8.8 H8.8" fill="none" stroke="#101010" stroke-width="1.2" /></g><path d="M521.00 96.30 h3 l-1.5 1.7 z" fill="#5a6070"/><path d="M527.00 91.60 v9.2" stroke="#aab0c0" stroke-width="0.7"/><g transform="translate(533.00 91.70)"><path d="M0.8 2.4 L3 0.8 L8.8 1.8 L8.2 6.6 L5.8 9 L1.8 7.6 Z" fill="#a0b0c8" stroke="#586888" stroke-width="0.6" /><path d="M2.6 3 L6.8 3.6 L6.4 6.2 L3.2 5.6 Z" fill="#dce4f0" stroke="#586888" stroke-width="0.3" /></g><path d="M546.30 96.30 h3 l-1.5 1.7 z" fill="#5a6070"/><path d="M554.70 92.20 v8.4" stroke="#8e94a4" stroke-width="0.9" stroke-dasharray="0.9 0.9"/><g transform="translate(559.50 91.70)"><path d="M1.6 9 L3 2 H8 L6.8 8.8" fill="none" stroke="#181818" stroke-width="1.2" /><circle cx="3" cy="1.8" r="0.8" fill="#e01818" /><circle cx="8.2" cy="1.8" r="0.8" fill="#e01818" /><circle cx="1.6" cy="8.8" r="0.7" fill="#18a040" /><circle cx="6.8" cy="8.8" r="0.7" fill="#18a040" /></g><g transform="translate(573.20 91.70)"><rect x="0.6" y="3" width="8" height="3.6" fill="#b8bcc8" rx="1.8" stroke="#8c90a0" stroke-width="0.4"/><circle cx="6.4" cy="4.8" r="0.6" fill="#e01818" /><circle cx="3.4" cy="4.6" r="0.6" fill="#5878c0" /></g><path d="M587.00 91.60 v9.2" stroke="#aab0c0" stroke-width="0.7"/><g transform="translate(590.90 91.70)"><path d="M2.4 1 H7 M4.7 1 V5.4" fill="none" stroke="#a0c0e8" stroke-width="1.1" /><path d="M0.6 8.2 C3 5.4 5.4 9.4 8.8 6.6" fill="none" stroke="#5080d8" stroke-width="0.9" /><path d="M4.7 5.4 L8.8 7.6" fill="none" stroke="#e06060" stroke-width="0.8" /></g><g transform="translate(604.10 91.70)"><path d="M0.4 5 L4.4 1.8 L9.2 4.4 L5 8.4 Z" fill="#2060e0" stroke="#1838a0" stroke-width="0.3" /><ellipse cx="4.9" cy="5" rx="2.9" ry="1.9" fill="#30c040"/><ellipse cx="5" cy="5.2" rx="2" ry="1.3" fill="#f0d020"/><ellipse cx="5.1" cy="5.4" rx="1.1" ry="0.7" fill="#e82010"/></g><g transform="translate(616.50 91.70)"><path d="M0.8 2 L3 0.6 L8.8 1.6 L8.4 7 L6 9 L1 7.6 Z" fill="#48b8c8" stroke="#486890" stroke-width="0.5" /><circle cx="3.6" cy="5" r="2.1" fill="#50c860" /><circle cx="3.6" cy="5" r="1.2" fill="#f0a020" /><circle cx="3.6" cy="5" r="0.5" fill="#e02010" /><path d="M6.4 3 L8.6 1.8 L8.2 6.8 L6.2 8.6 Z" fill="#70a0d0" /></g><rect x="627.40" y="90.00" width="12.2" height="12.4" rx="1" fill="url(#hlg)" stroke="#e2a446" stroke-width="0.7"/><g transform="translate(629.00 91.70)"><path d="M4.4 5 V2.6 M3 3.4 L4.4 1 L5.8 3.4 Z M4.4 5 V7 M3 6.4 L4.4 9 L5.8 6.4 Z" fill="#18902c" stroke="#18902c" stroke-width="0.9" /><path d="M4.4 3.6 L8 2.2 M6.8 1.4 L8.8 2 L7.6 3.6 Z" fill="#18902c" stroke="#18902c" stroke-width="0.7" /><circle cx="2.4" cy="4.2" r="1.3" fill="#30a840" /></g><g transform="translate(642.70 91.70)"><path d="M0.6 6.4 L8.8 1.6" fill="none" stroke="#88a8dc" stroke-width="0.9" /><path d="M0.6 8.4 L8.8 4.2" fill="none" stroke="#3c5cc0" stroke-width="1" /><path d="M5 6.6 L9 7.4" fill="none" stroke="#e01818" stroke-width="0.9" /><path d="M1 5 L6 2.4" fill="none" stroke="#b8c8e8" stroke-width="0.8" /></g><g transform="translate(656.20 91.70)"><rect x="0.4" y="0.8" width="3.6" height="3.2" fill="#f4dc28" rx="0.9" stroke="#807010" stroke-width="0.5"/><rect x="0.4" y="5.2" width="3.6" height="3.2" fill="#f4dc28" rx="0.9" stroke="#807010" stroke-width="0.5"/><rect x="5" y="0.8" width="3.6" height="3.2" fill="#f4dc28" rx="0.9" stroke="#807010" stroke-width="0.5"/><rect x="5" y="5.2" width="3.6" height="3.2" fill="#f4dc28" rx="0.9" stroke="#807010" stroke-width="0.5"/></g><path d="M668.90 96.30 h3 l-1.5 1.7 z" fill="#5a6070"/><g transform="translate(675.50 91.70)"><path d="M2.6 0.8 H7 M4.8 0.8 V5" fill="none" stroke="#a0c0e8" stroke-width="1.1" /><path d="M0.4 6.4 C2 9.6 4 9.4 5 7.2" fill="none" stroke="#4060d0" stroke-width="0.8" /><path d="M5 7.2 C6.4 5.4 8 6.6 9 8.4" fill="none" stroke="#e04040" stroke-width="0.8" /></g><g transform="translate(688.10 91.70)"><rect x="0.4" y="0.4" width="3.8" height="3.8" fill="#283890" stroke="#8090c8" stroke-width="0.4"/><rect x="1.3" y="1.4" width="2" height="1.8" fill="#b8c4ec" /><rect x="0.4" y="4.9" width="3.8" height="3.8" fill="#283890" stroke="#8090c8" stroke-width="0.4"/><rect x="1.3" y="5.9" width="2" height="1.8" fill="#b8c4ec" /><rect x="4.9" y="0.4" width="3.8" height="3.8" fill="#283890" stroke="#8090c8" stroke-width="0.4"/><rect x="5.800000000000001" y="1.4" width="2" height="1.8" fill="#b8c4ec" /><rect x="4.9" y="4.9" width="3.8" height="3.8" fill="#283890" stroke="#8090c8" stroke-width="0.4"/><rect x="5.800000000000001" y="5.9" width="2" height="1.8" fill="#b8c4ec" /><circle cx="2.4" cy="7.2" r="0.5" fill="#e01818" /><circle cx="7" cy="7.2" r="0.5" fill="#e01818" /></g><path d="M701.00 91.60 v9.2" stroke="#aab0c0" stroke-width="0.7"/><rect x="703.20" y="90.00" width="12.2" height="12.4" rx="1" fill="url(#hlg)" stroke="#e2a446" stroke-width="0.7"/><g transform="translate(704.80 91.70)"><rect x="1" y="0.4" width="7.4" height="8.8" fill="#f8f0d8" stroke="#6a5420" stroke-width="0.7"/><rect x="2.2" y="1.8" width="2.4" height="1.4" fill="#2050d0" /><rect x="2.2" y="3.2" width="2.4" height="1.4" fill="#20b040" /><rect x="2.2" y="4.6" width="2.4" height="1.4" fill="#f0d020" /><rect x="2.2" y="6" width="2.4" height="1.6" fill="#e02010" /><rect x="5.2" y="1.8" width="2.4" height="5.8" fill="#a0a4b0" stroke="#5a5e68" stroke-width="0.3"/></g><g transform="translate(719.50 91.70)"><circle cx="2.2" cy="2.4" r="1.8" fill="#f4dc28" stroke="#c8a800" stroke-width="0.4"/><path d="M1 8.6 L7 4" fill="none" stroke="#182858" stroke-width="1.6" /><path d="M2.6 7.4 L5.6 5.2" fill="none" stroke="#5090e0" stroke-width="0.9" /><path d="M6.4 2.6 L8.8 1.2 L8.4 3.6 Z" fill="#e01818" /><path d="M6.8 4.2 L8.8 5.2" fill="none" stroke="#e01818" stroke-width="0.8" /></g><path d="M732.10 96.30 h3 l-1.5 1.7 z" fill="#5a6070"/><g transform="translate(739.80 91.70)"><path d="M0.6 0.8 V9 H8.8 Z" fill="#2038c0" /><path d="M0.6 3 V9 H6.6 Z" fill="#18a838" /><path d="M0.6 5 V9 H4.6 Z" fill="#f0d818" /><path d="M0.6 7 V9 H2.6 Z" fill="#e01c10" /><path d="M4.4 5 L8.8 0.6 L9.4 1.8 L5.4 6.2 Z" fill="#f4dc28" stroke="#705c08" stroke-width="0.4" /><path d="M4.4 5 L4 6.6 L5.4 6.2 Z" fill="#202020" /></g><path d="M753.00 96.30 h3 l-1.5 1.7 z" fill="#5a6070"/></svg>
<span class="t" style="left:259.50px;top:77.84px;font-size:6.6px;line-height:7.92px;color:#1c2444;">RC1 - G/p or Gq/p</span>



<span class="t" style="left:3.00px;top:106.80px;font-size:6.5px;line-height:7.80px;color:#2a2f3f;transform:scaleX(1.0266);">Project Navigator - Display</span>
<svg style="left:175.5px;top:107.5px" width="16" height="6" viewBox="0 0 16 6"><path d="M1.6 0.6 H3.9 V3.4 H1.6 Z M0.9 3.5 H4.6 M2.75 3.5 V5.6" stroke="#4a5060" stroke-width="0.7" fill="none"/><path d="M10.6 0.8 L14.4 4.8 M14.4 0.8 L10.6 4.8" stroke="#3a4050" stroke-width="0.8" fill="none"/></svg>





<svg style="left:184px;top:121px" width="6" height="5" viewBox="0 0 6 5"><path d="M0.8 3.8 L3 1.4 L5.2 3.8" stroke="#3c3c3c" stroke-width="1.3" fill="none"/></svg>


<svg style="left:0;top:0" width="200" height="570" viewBox="0 0 200 570"><g stroke="#c2c2c2" stroke-width="0.7" fill="none"><path d="M8.90 123.50 H15.80"/><path d="M8.90 123.50 V396.50"/><path d="M19.95 128.10 V134.00"/><path d="M19.95 134.00 H26.85"/><path d="M19.95 134.00 V176.00"/><path d="M31.00 138.60 V144.50"/><path d="M31.00 144.50 H37.90"/><path d="M31.00 144.50 V155.00"/><path d="M31.00 155.00 H37.90"/><path d="M31.00 155.00 V165.50"/><path d="M31.00 165.50 H37.90"/><path d="M19.95 176.00 H26.85"/><path d="M19.95 176.00 V186.50"/><path d="M19.95 186.50 H26.85"/><path d="M19.95 186.50 V197.00"/><path d="M19.95 197.00 H26.85"/><path d="M19.95 197.00 V207.50"/><path d="M19.95 207.50 H26.85"/><path d="M19.95 207.50 V218.00"/><path d="M19.95 218.00 H26.85"/><path d="M19.95 218.00 V228.50"/><path d="M19.95 228.50 H26.85"/><path d="M19.95 228.50 V239.00"/><path d="M19.95 239.00 H26.85"/><path d="M19.95 239.00 V249.50"/><path d="M19.95 249.50 H26.85"/><path d="M19.95 249.50 V260.00"/><path d="M19.95 260.00 H26.85"/><path d="M19.95 260.00 V270.50"/><path d="M19.95 270.50 H26.85"/><path d="M19.95 270.50 V281.00"/><path d="M19.95 281.00 H26.85"/><path d="M19.95 281.00 V386.00"/><path d="M31.00 285.60 V291.50"/><path d="M31.00 291.50 H37.90"/><path d="M31.00 291.50 V302.00"/><path d="M31.00 302.00 H37.90"/><path d="M31.00 302.00 V354.50"/><path d="M42.05 306.60 V312.50"/><path d="M42.05 312.50 H48.95"/><path d="M42.05 312.50 V344.00"/><path d="M53.10 317.10 V323.00"/><path d="M53.10 323.00 H60.00"/><path d="M53.10 323.00 V333.50"/><path d="M53.10 333.50 H60.00"/><path d="M42.05 344.00 H48.95"/><path d="M31.00 354.50 H37.90"/><path d="M31.00 354.50 V365.00"/><path d="M31.00 365.00 H37.90"/><path d="M31.00 365.00 V375.50"/><path d="M31.00 375.50 H37.90"/><path d="M19.95 386.00 H26.85"/><path d="M8.90 396.50 H15.80"/><path d="M8.90 396.50 V470.00"/><path d="M19.95 401.10 V407.00"/><path d="M19.95 407.00 H26.85"/><path d="M19.95 407.00 V417.50"/><path d="M19.95 417.50 H26.85"/><path d="M19.95 417.50 V428.00"/><path d="M19.95 428.00 H26.85"/><path d="M19.95 428.00 V438.50"/><path d="M19.95 438.50 H26.85"/><path d="M19.95 438.50 V449.00"/><path d="M19.95 449.00 H26.85"/><path d="M19.95 449.00 V459.50"/><path d="M19.95 459.50 H26.85"/><path d="M8.90 470.00 H15.80"/><path d="M19.95 474.60 V480.50"/><path d="M19.95 480.50 H26.85"/><path d="M19.95 480.50 V491.00"/><path d="M19.95 491.00 H26.85"/><path d="M19.95 491.00 V501.50"/><path d="M19.95 501.50 H26.85"/><path d="M19.95 501.50 V512.00"/><path d="M19.95 512.00 H26.85"/><path d="M19.95 512.00 V522.50"/><path d="M19.95 522.50 H26.85"/><path d="M8.90 470.00 V527.6"/><path d="M8.90 116.8 V123.50"/></g></svg>
<svg style="left:6.20px;top:120.80px" width="5.4" height="5.4" viewBox="0 0 5 5"><rect x="0.3" y="0.3" width="4.4" height="4.4" rx="0.5" fill="#f6f7fb" stroke="#98a2b8" stroke-width="0.65"/><path d="M1.4 2.5 H3.6" stroke="#34549a" stroke-width="0.8"/></svg>
<svg style="left:16.10px;top:119.60px" width="7.8" height="7.8" viewBox="0 0 7.8 7.8"><rect x="0.4" y="0.4" width="7" height="7" fill="#fff" stroke="#666" stroke-width="0.8"/><path d="M1.7 4 L3.2 5.6 L6.2 2" stroke="#111" stroke-width="1.25" fill="none"/></svg>
<div class="ic res" style="left:25.30px;top:119.00px"></div>

<span class="t" style="left:37.70px;top:119.64px;font-size:6.6px;line-height:7.92px;color:#fff;font-weight:bold;transform:scaleX(0.9652);">Results</span>
<svg style="left:17.25px;top:131.30px" width="5.4" height="5.4" viewBox="0 0 5 5"><rect x="0.3" y="0.3" width="4.4" height="4.4" rx="0.5" fill="#f6f7fb" stroke="#98a2b8" stroke-width="0.65"/><path d="M1.4 2.5 H3.6" stroke="#34549a" stroke-width="0.8"/></svg>
<svg style="left:27.15px;top:130.10px" width="7.8" height="7.8" viewBox="0 0 7.8 7.8"><rect x="0.4" y="0.4" width="7" height="7" fill="#fff" stroke="#666" stroke-width="0.8"/><path d="M1.7 4 L3.2 5.6 L6.2 2" stroke="#111" stroke-width="1.25" fill="none"/></svg>
<div class="ic res" style="left:36.35px;top:129.50px"></div>
<span class="t" style="left:48.75px;top:130.14px;font-size:6.6px;line-height:7.92px;color:#0a0a0a;transform:scaleX(0.9887);-webkit-text-stroke:0.12px #0a0a0a;">Result Values</span>
<svg style="left:28.30px;top:141.80px" width="5.4" height="5.4" viewBox="0 0 5 5"><rect x="0.3" y="0.3" width="4.4" height="4.4" rx="0.5" fill="#f6f7fb" stroke="#98a2b8" stroke-width="0.65"/><path d="M1.4 2.5 H3.6" stroke="#34549a" stroke-width="0.8"/><path d="M2.5 1.4 V3.6" stroke="#34549a" stroke-width="0.8"/></svg>
<svg style="left:38.20px;top:140.60px" width="7.8" height="7.8" viewBox="0 0 7.8 7.8"><rect x="0.4" y="0.4" width="7" height="7" fill="#fff" stroke="#666" stroke-width="0.8"/><path d="M1.7 4 L3.2 5.6 L6.2 2" stroke="#111" stroke-width="1.25" fill="none"/></svg>
<div class="ic res" style="left:47.40px;top:140.00px"></div>
<span class="t" style="left:59.80px;top:140.64px;font-size:6.6px;line-height:7.92px;color:#0a0a0a;transform:scaleX(1.0301);-webkit-text-stroke:0.12px #0a0a0a;">Members, Supports, Sections</span>
<svg style="left:38.20px;top:151.10px" width="7.8" height="7.8" viewBox="0 0 7.8 7.8"><rect x="0.4" y="0.4" width="7" height="7" fill="#fff" stroke="#666" stroke-width="0.8"/><rect x="1.3" y="1.3" width="5.2" height="5.2" fill="#e9ebf0"/><rect x="2.4" y="2.4" width="3" height="3" fill="#f6f7f9"/></svg>
<div class="ic res" style="left:47.40px;top:150.50px"></div>
<span class="t" style="left:59.80px;top:151.14px;font-size:6.6px;line-height:7.92px;color:#0a0a0a;transform:scaleX(0.9758);-webkit-text-stroke:0.12px #0a0a0a;">Surfaces</span>
<svg style="left:38.20px;top:161.60px" width="7.8" height="7.8" viewBox="0 0 7.8 7.8"><rect x="0.4" y="0.4" width="7" height="7" fill="#fff" stroke="#666" stroke-width="0.8"/><path d="M1.7 4 L3.2 5.6 L6.2 2" stroke="#111" stroke-width="1.25" fill="none"/></svg>
<div class="ic res" style="left:47.40px;top:161.00px"></div>
<span class="t" style="left:59.80px;top:161.64px;font-size:6.6px;line-height:7.92px;color:#0a0a0a;transform:scaleX(1.0535);-webkit-text-stroke:0.12px #0a0a0a;">Filter Active</span>
<svg style="left:27.15px;top:172.10px" width="7.8" height="7.8" viewBox="0 0 7.8 7.8"><rect x="0.4" y="0.4" width="7" height="7" fill="#fff" stroke="#666" stroke-width="0.8"/><path d="M1.7 4 L3.2 5.6 L6.2 2" stroke="#111" stroke-width="1.25" fill="none"/></svg>
<div class="ic res" style="left:36.35px;top:171.50px"></div>
<span class="t" style="left:48.75px;top:172.14px;font-size:6.6px;line-height:7.92px;color:#0a0a0a;transform:scaleX(1.0400);-webkit-text-stroke:0.12px #0a0a0a;">Title Info</span>
<svg style="left:27.15px;top:182.60px" width="7.8" height="7.8" viewBox="0 0 7.8 7.8"><rect x="0.4" y="0.4" width="7" height="7" fill="#fff" stroke="#666" stroke-width="0.8"/><path d="M1.7 4 L3.2 5.6 L6.2 2" stroke="#111" stroke-width="1.25" fill="none"/></svg>
<div class="ic res" style="left:36.35px;top:182.00px"></div>
<span class="t" style="left:48.75px;top:182.64px;font-size:6.6px;line-height:7.92px;color:#0a0a0a;transform:scaleX(1.1192);-webkit-text-stroke:0.12px #0a0a0a;">Max/Min Info</span>
<svg style="left:17.25px;top:194.30px" width="5.4" height="5.4" viewBox="0 0 5 5"><rect x="0.3" y="0.3" width="4.4" height="4.4" rx="0.5" fill="#f6f7fb" stroke="#98a2b8" stroke-width="0.65"/><path d="M1.4 2.5 H3.6" stroke="#34549a" stroke-width="0.8"/><path d="M2.5 1.4 V3.6" stroke="#34549a" stroke-width="0.8"/></svg>
<svg style="left:27.15px;top:193.10px" width="7.8" height="7.8" viewBox="0 0 7.8 7.8"><rect x="0.4" y="0.4" width="7" height="7" fill="#fff" stroke="#666" stroke-width="0.8"/><rect x="2" y="2" width="3.8" height="3.8" fill="#8a8a8a"/></svg>
<div class="ic res" style="left:36.35px;top:192.50px"></div>
<span class="t" style="left:48.75px;top:193.14px;font-size:6.6px;line-height:7.92px;color:#0a0a0a;transform:scaleX(1.0732);-webkit-text-stroke:0.12px #0a0a0a;">Deformation</span>
<svg style="left:17.25px;top:204.80px" width="5.4" height="5.4" viewBox="0 0 5 5"><rect x="0.3" y="0.3" width="4.4" height="4.4" rx="0.5" fill="#f6f7fb" stroke="#98a2b8" stroke-width="0.65"/><path d="M1.4 2.5 H3.6" stroke="#34549a" stroke-width="0.8"/><path d="M2.5 1.4 V3.6" stroke="#34549a" stroke-width="0.8"/></svg>
<svg style="left:27.15px;top:203.60px" width="7.8" height="7.8" viewBox="0 0 7.8 7.8"><rect x="0.4" y="0.4" width="7" height="7" fill="#fff" stroke="#666" stroke-width="0.8"/><rect x="2" y="2" width="3.8" height="3.8" fill="#8a8a8a"/></svg>
<div class="ic res" style="left:36.35px;top:203.00px"></div>
<span class="t" style="left:48.75px;top:203.64px;font-size:6.6px;line-height:7.92px;color:#0a0a0a;transform:scaleX(1.0424);-webkit-text-stroke:0.12px #0a0a0a;">Members</span>
<svg style="left:17.25px;top:215.30px" width="5.4" height="5.4" viewBox="0 0 5 5"><rect x="0.3" y="0.3" width="4.4" height="4.4" rx="0.5" fill="#f6f7fb" stroke="#98a2b8" stroke-width="0.65"/><path d="M1.4 2.5 H3.6" stroke="#34549a" stroke-width="0.8"/><path d="M2.5 1.4 V3.6" stroke="#34549a" stroke-width="0.8"/></svg>
<svg style="left:27.15px;top:214.10px" width="7.8" height="7.8" viewBox="0 0 7.8 7.8"><rect x="0.4" y="0.4" width="7" height="7" fill="#fff" stroke="#666" stroke-width="0.8"/><rect x="2" y="2" width="3.8" height="3.8" fill="#8a8a8a"/></svg>
<div class="ic res" style="left:36.35px;top:213.50px"></div>
<span class="t" style="left:48.75px;top:214.14px;font-size:6.6px;line-height:7.92px;color:#0a0a0a;transform:scaleX(0.9623);-webkit-text-stroke:0.12px #0a0a0a;">Surfaces</span>
<svg style="left:17.25px;top:225.80px" width="5.4" height="5.4" viewBox="0 0 5 5"><rect x="0.3" y="0.3" width="4.4" height="4.4" rx="0.5" fill="#f6f7fb" stroke="#98a2b8" stroke-width="0.65"/><path d="M1.4 2.5 H3.6" stroke="#34549a" stroke-width="0.8"/><path d="M2.5 1.4 V3.6" stroke="#34549a" stroke-width="0.8"/></svg>
<svg style="left:27.15px;top:224.60px" width="7.8" height="7.8" viewBox="0 0 7.8 7.8"><rect x="0.4" y="0.4" width="7" height="7" fill="#fff" stroke="#666" stroke-width="0.8"/><rect x="2" y="2" width="3.8" height="3.8" fill="#8a8a8a"/></svg>
<div class="ic res" style="left:36.35px;top:224.00px"></div>
<span class="t" style="left:48.75px;top:224.64px;font-size:6.6px;line-height:7.92px;color:#0a0a0a;transform:scaleX(0.9711);-webkit-text-stroke:0.12px #0a0a0a;">Solids</span>
<svg style="left:17.25px;top:236.30px" width="5.4" height="5.4" viewBox="0 0 5 5"><rect x="0.3" y="0.3" width="4.4" height="4.4" rx="0.5" fill="#f6f7fb" stroke="#98a2b8" stroke-width="0.65"/><path d="M1.4 2.5 H3.6" stroke="#34549a" stroke-width="0.8"/><path d="M2.5 1.4 V3.6" stroke="#34549a" stroke-width="0.8"/></svg>
<svg style="left:27.15px;top:235.10px" width="7.8" height="7.8" viewBox="0 0 7.8 7.8"><rect x="0.4" y="0.4" width="7" height="7" fill="#fff" stroke="#666" stroke-width="0.8"/><rect x="2" y="2" width="3.8" height="3.8" fill="#8a8a8a"/></svg>
<div class="ic res" style="left:36.35px;top:234.50px"></div>
<span class="t" style="left:48.75px;top:235.14px;font-size:6.6px;line-height:7.92px;color:#0a0a0a;transform:scaleX(1.0216);-webkit-text-stroke:0.12px #0a0a0a;">Type of Display</span>
<svg style="left:17.25px;top:246.80px" width="5.4" height="5.4" viewBox="0 0 5 5"><rect x="0.3" y="0.3" width="4.4" height="4.4" rx="0.5" fill="#f6f7fb" stroke="#98a2b8" stroke-width="0.65"/><path d="M1.4 2.5 H3.6" stroke="#34549a" stroke-width="0.8"/><path d="M2.5 1.4 V3.6" stroke="#34549a" stroke-width="0.8"/></svg>
<svg style="left:27.15px;top:245.60px" width="7.8" height="7.8" viewBox="0 0 7.8 7.8"><rect x="0.4" y="0.4" width="7" height="7" fill="#fff" stroke="#666" stroke-width="0.8"/><path d="M1.7 4 L3.2 5.6 L6.2 2" stroke="#111" stroke-width="1.25" fill="none"/></svg>
<div class="ic res" style="left:36.35px;top:245.00px"></div>
<span class="t" style="left:48.75px;top:245.64px;font-size:6.6px;line-height:7.92px;color:#0a0a0a;transform:scaleX(1.0572);-webkit-text-stroke:0.12px #0a0a0a;">Ribs - Effective Contribution on Surface/Me</span>
<svg style="left:27.15px;top:256.10px" width="7.8" height="7.8" viewBox="0 0 7.8 7.8"><rect x="0.4" y="0.4" width="7" height="7" fill="#fff" stroke="#666" stroke-width="0.8"/><path d="M1.7 4 L3.2 5.6 L6.2 2" stroke="#111" stroke-width="1.25" fill="none"/></svg>
<div class="ic res" style="left:36.35px;top:255.50px"></div>
<span class="t" style="left:48.75px;top:256.14px;font-size:6.6px;line-height:7.92px;color:#0a0a0a;transform:scaleX(0.9781);-webkit-text-stroke:0.12px #0a0a0a;">Result Beams</span>
<svg style="left:27.15px;top:266.60px" width="7.8" height="7.8" viewBox="0 0 7.8 7.8"><rect x="0.4" y="0.4" width="7" height="7" fill="#fff" stroke="#666" stroke-width="0.8"/><rect x="1.3" y="1.3" width="5.2" height="5.2" fill="#e9ebf0"/><rect x="2.4" y="2.4" width="3" height="3" fill="#f6f7f9"/></svg>
<div class="ic res" style="left:36.35px;top:266.00px"></div>
<span class="t" style="left:48.75px;top:266.64px;font-size:6.6px;line-height:7.92px;color:#0a0a0a;transform:scaleX(1.0458);-webkit-text-stroke:0.12px #0a0a0a;">Results Within Column Area</span>
<svg style="left:17.25px;top:278.30px" width="5.4" height="5.4" viewBox="0 0 5 5"><rect x="0.3" y="0.3" width="4.4" height="4.4" rx="0.5" fill="#f6f7fb" stroke="#98a2b8" stroke-width="0.65"/><path d="M1.4 2.5 H3.6" stroke="#34549a" stroke-width="0.8"/></svg>
<svg style="left:27.15px;top:277.10px" width="7.8" height="7.8" viewBox="0 0 7.8 7.8"><rect x="0.4" y="0.4" width="7" height="7" fill="#fff" stroke="#666" stroke-width="0.8"/><rect x="2" y="2" width="3.8" height="3.8" fill="#8a8a8a"/></svg>
<div class="ic res" style="left:36.35px;top:276.50px"></div>
<span class="t" style="left:48.75px;top:277.14px;font-size:6.6px;line-height:7.92px;color:#0a0a0a;transform:scaleX(1.0203);-webkit-text-stroke:0.12px #0a0a0a;">Support Reactions</span>
<svg style="left:28.30px;top:288.80px" width="5.4" height="5.4" viewBox="0 0 5 5"><rect x="0.3" y="0.3" width="4.4" height="4.4" rx="0.5" fill="#f6f7fb" stroke="#98a2b8" stroke-width="0.65"/><path d="M1.4 2.5 H3.6" stroke="#34549a" stroke-width="0.8"/><path d="M2.5 1.4 V3.6" stroke="#34549a" stroke-width="0.8"/></svg>
<svg style="left:38.20px;top:287.60px" width="7.8" height="7.8" viewBox="0 0 7.8 7.8"><rect x="0.4" y="0.4" width="7" height="7" fill="#fff" stroke="#666" stroke-width="0.8"/><path d="M1.7 4 L3.2 5.6 L6.2 2" stroke="#111" stroke-width="1.25" fill="none"/></svg>
<div class="ic res" style="left:47.40px;top:287.00px"></div>
<span class="t" style="left:59.80px;top:287.64px;font-size:6.6px;line-height:7.92px;color:#0a0a0a;transform:scaleX(1.0476);-webkit-text-stroke:0.12px #0a0a0a;">Actual</span>
<svg style="left:28.30px;top:299.30px" width="5.4" height="5.4" viewBox="0 0 5 5"><rect x="0.3" y="0.3" width="4.4" height="4.4" rx="0.5" fill="#f6f7fb" stroke="#98a2b8" stroke-width="0.65"/><path d="M1.4 2.5 H3.6" stroke="#34549a" stroke-width="0.8"/></svg>
<svg style="left:38.20px;top:298.10px" width="7.8" height="7.8" viewBox="0 0 7.8 7.8"><rect x="0.4" y="0.4" width="7" height="7" fill="#fff" stroke="#666" stroke-width="0.8"/><path d="M1.7 4 L3.2 5.6 L6.2 2" stroke="#111" stroke-width="1.25" fill="none"/></svg>
<div class="ic res" style="left:47.40px;top:297.50px"></div>
<span class="t" style="left:59.80px;top:298.14px;font-size:6.6px;line-height:7.92px;color:#0a0a0a;transform:scaleX(1.0809);-webkit-text-stroke:0.12px #0a0a0a;">Smooth Distribution</span>
<svg style="left:39.35px;top:309.80px" width="5.4" height="5.4" viewBox="0 0 5 5"><rect x="0.3" y="0.3" width="4.4" height="4.4" rx="0.5" fill="#f6f7fb" stroke="#98a2b8" stroke-width="0.65"/><path d="M1.4 2.5 H3.6" stroke="#34549a" stroke-width="0.8"/></svg>
<svg style="left:49.85px;top:308.60px" width="7.8" height="7.8" viewBox="0 0 7.8 7.8"><circle cx="3.9" cy="3.9" r="3.35" fill="#fff" stroke="#5a5a5a" stroke-width="0.8"/><circle cx="3.9" cy="3.9" r="1.7" fill="#151515"/></svg>
<div class="ic res" style="left:58.45px;top:308.00px"></div>
<span class="t" style="left:70.85px;top:308.64px;font-size:6.6px;line-height:7.92px;color:#0a0a0a;transform:scaleX(1.0538);-webkit-text-stroke:0.12px #0a0a0a;">Constant (Mean)</span>
<svg style="left:60.90px;top:319.10px" width="7.8" height="7.8" viewBox="0 0 7.8 7.8"><circle cx="3.9" cy="3.9" r="3.35" fill="#fff" stroke="#5a5a5a" stroke-width="0.8"/></svg>
<div class="ic res" style="left:69.50px;top:318.50px"></div>
<span class="t" style="left:81.90px;top:319.14px;font-size:6.6px;line-height:7.92px;color:#0a0a0a;transform:scaleX(1.0756);-webkit-text-stroke:0.12px #0a0a0a;">Sum of result combination</span>
<svg style="left:60.90px;top:329.60px" width="7.8" height="7.8" viewBox="0 0 7.8 7.8"><circle cx="3.9" cy="3.9" r="3.35" fill="#fff" stroke="#5a5a5a" stroke-width="0.8"/><circle cx="3.9" cy="3.9" r="1.7" fill="#151515"/></svg>
<div class="ic res" style="left:69.50px;top:329.00px"></div>
<span class="t" style="left:81.90px;top:329.64px;font-size:6.6px;line-height:7.92px;color:#0a0a0a;transform:scaleX(1.0335);-webkit-text-stroke:0.12px #0a0a0a;">Mean value of displayed values</span>
<svg style="left:49.85px;top:340.10px" width="7.8" height="7.8" viewBox="0 0 7.8 7.8"><circle cx="3.9" cy="3.9" r="3.35" fill="#fff" stroke="#5a5a5a" stroke-width="0.8"/></svg>
<div class="ic res" style="left:58.45px;top:339.50px"></div>
<span class="t" style="left:70.85px;top:340.14px;font-size:6.6px;line-height:7.92px;color:#0a0a0a;transform:scaleX(0.9894);-webkit-text-stroke:0.12px #0a0a0a;">Linear</span>
<svg style="left:28.30px;top:351.80px" width="5.4" height="5.4" viewBox="0 0 5 5"><rect x="0.3" y="0.3" width="4.4" height="4.4" rx="0.5" fill="#f6f7fb" stroke="#98a2b8" stroke-width="0.65"/><path d="M1.4 2.5 H3.6" stroke="#34549a" stroke-width="0.8"/><path d="M2.5 1.4 V3.6" stroke="#34549a" stroke-width="0.8"/></svg>
<svg style="left:38.20px;top:350.60px" width="7.8" height="7.8" viewBox="0 0 7.8 7.8"><rect x="0.4" y="0.4" width="7" height="7" fill="#fff" stroke="#666" stroke-width="0.8"/><rect x="1.3" y="1.3" width="5.2" height="5.2" fill="#e9ebf0"/><rect x="2.4" y="2.4" width="3" height="3" fill="#f6f7f9"/></svg>
<div class="ic res" style="left:47.40px;top:350.00px"></div>
<span class="t" style="left:59.80px;top:350.64px;font-size:6.6px;line-height:7.92px;color:#0a0a0a;transform:scaleX(1.0636);-webkit-text-stroke:0.12px #0a0a0a;">Info</span>
<svg style="left:38.20px;top:361.10px" width="7.8" height="7.8" viewBox="0 0 7.8 7.8"><rect x="0.4" y="0.4" width="7" height="7" fill="#fff" stroke="#666" stroke-width="0.8"/><rect x="1.3" y="1.3" width="5.2" height="5.2" fill="#e9ebf0"/><rect x="2.4" y="2.4" width="3" height="3" fill="#f6f7f9"/></svg>
<div class="ic res" style="left:47.40px;top:360.50px"></div>
<span class="t" style="left:59.80px;top:361.14px;font-size:6.6px;line-height:7.92px;color:#0a0a0a;transform:scaleX(1.0245);-webkit-text-stroke:0.12px #0a0a0a;">Draw in XY-Plane</span>
<svg style="left:38.20px;top:371.60px" width="7.8" height="7.8" viewBox="0 0 7.8 7.8"><rect x="0.4" y="0.4" width="7" height="7" fill="#fff" stroke="#666" stroke-width="0.8"/><rect x="1.3" y="1.3" width="5.2" height="5.2" fill="#e9ebf0"/><rect x="2.4" y="2.4" width="3" height="3" fill="#f6f7f9"/></svg>
<div class="ic res" style="left:47.40px;top:371.00px"></div>
<span class="t" style="left:59.80px;top:371.64px;font-size:6.6px;line-height:7.92px;color:#0a0a0a;transform:scaleX(1.0581);-webkit-text-stroke:0.12px #0a0a0a;">With sign</span>
<svg style="left:27.15px;top:382.10px" width="7.8" height="7.8" viewBox="0 0 7.8 7.8"><rect x="0.4" y="0.4" width="7" height="7" fill="#fff" stroke="#666" stroke-width="0.8"/><path d="M1.7 4 L3.2 5.6 L6.2 2" stroke="#111" stroke-width="1.25" fill="none"/></svg>
<div class="ic res" style="left:36.35px;top:381.50px"></div>
<span class="t" style="left:48.75px;top:382.14px;font-size:6.6px;line-height:7.92px;color:#0a0a0a;transform:scaleX(1.0181);-webkit-text-stroke:0.12px #0a0a0a;">Transparent</span>
<svg style="left:6.20px;top:393.80px" width="5.4" height="5.4" viewBox="0 0 5 5"><rect x="0.3" y="0.3" width="4.4" height="4.4" rx="0.5" fill="#f6f7fb" stroke="#98a2b8" stroke-width="0.65"/><path d="M1.4 2.5 H3.6" stroke="#34549a" stroke-width="0.8"/></svg>
<svg style="left:16.10px;top:392.60px" width="7.8" height="7.8" viewBox="0 0 7.8 7.8"><rect x="0.4" y="0.4" width="7" height="7" fill="#fff" stroke="#666" stroke-width="0.8"/><path d="M1.7 4 L3.2 5.6 L6.2 2" stroke="#111" stroke-width="1.25" fill="none"/></svg>
<svg style="left:25.60px;top:393.20px" width="8.2" height="6.4" viewBox="0 0 8.2 6.4"><defs><linearGradient id="mg26" x1="0" y1="0" x2="1" y2="1"><stop offset="0" stop-color="#6fa0e6"/><stop offset="0.5" stop-color="#3a6cc4"/><stop offset="1" stop-color="#1c4aa0"/></linearGradient></defs><rect x="0" y="0" width="8.2" height="6.4" fill="url(#mg26)"/><path d="M0 2.1 H8.2 M0 4.3 H8.2 M2.7 0 V6.4 M5.5 0 V6.4" stroke="#a8c4f0" stroke-opacity="0.45" stroke-width="0.45"/></svg>
<span class="t" style="left:37.70px;top:392.64px;font-size:6.6px;line-height:7.92px;color:#0a0a0a;transform:scaleX(0.9587);-webkit-text-stroke:0.12px #0a0a0a;">FE Mesh</span>
<svg style="left:17.25px;top:404.30px" width="5.4" height="5.4" viewBox="0 0 5 5"><rect x="0.3" y="0.3" width="4.4" height="4.4" rx="0.5" fill="#f6f7fb" stroke="#98a2b8" stroke-width="0.65"/><path d="M1.4 2.5 H3.6" stroke="#34549a" stroke-width="0.8"/><path d="M2.5 1.4 V3.6" stroke="#34549a" stroke-width="0.8"/></svg>
<svg style="left:27.15px;top:403.10px" width="7.8" height="7.8" viewBox="0 0 7.8 7.8"><rect x="0.4" y="0.4" width="7" height="7" fill="#fff" stroke="#666" stroke-width="0.8"/><rect x="1.3" y="1.3" width="5.2" height="5.2" fill="#e9ebf0"/><rect x="2.4" y="2.4" width="3" height="3" fill="#f6f7f9"/></svg>
<svg style="left:36.65px;top:403.70px" width="8.2" height="6.4" viewBox="0 0 8.2 6.4"><defs><linearGradient id="mg27" x1="0" y1="0" x2="1" y2="1"><stop offset="0" stop-color="#6fa0e6"/><stop offset="0.5" stop-color="#3a6cc4"/><stop offset="1" stop-color="#1c4aa0"/></linearGradient></defs><rect x="0" y="0" width="8.2" height="6.4" fill="url(#mg27)"/><path d="M0 2.1 H8.2 M0 4.3 H8.2 M2.7 0 V6.4 M5.5 0 V6.4" stroke="#a8c4f0" stroke-opacity="0.45" stroke-width="0.45"/></svg>
<span class="t" style="left:48.75px;top:403.14px;font-size:6.6px;line-height:7.92px;color:#0a0a0a;transform:scaleX(1.0431);-webkit-text-stroke:0.12px #0a0a0a;">On Members</span>
<svg style="left:27.15px;top:413.60px" width="7.8" height="7.8" viewBox="0 0 7.8 7.8"><rect x="0.4" y="0.4" width="7" height="7" fill="#fff" stroke="#666" stroke-width="0.8"/><rect x="1.3" y="1.3" width="5.2" height="5.2" fill="#e9ebf0"/><rect x="2.4" y="2.4" width="3" height="3" fill="#f6f7f9"/></svg>
<svg style="left:36.65px;top:414.20px" width="8.2" height="6.4" viewBox="0 0 8.2 6.4"><defs><linearGradient id="mg28" x1="0" y1="0" x2="1" y2="1"><stop offset="0" stop-color="#6fa0e6"/><stop offset="0.5" stop-color="#3a6cc4"/><stop offset="1" stop-color="#1c4aa0"/></linearGradient></defs><rect x="0" y="0" width="8.2" height="6.4" fill="url(#mg28)"/><path d="M0 2.1 H8.2 M0 4.3 H8.2 M2.7 0 V6.4 M5.5 0 V6.4" stroke="#a8c4f0" stroke-opacity="0.45" stroke-width="0.45"/></svg>
<span class="t" style="left:48.75px;top:413.64px;font-size:6.6px;line-height:7.92px;color:#0a0a0a;transform:scaleX(1.0257);-webkit-text-stroke:0.12px #0a0a0a;">On Member Results</span>
<svg style="left:17.25px;top:425.30px" width="5.4" height="5.4" viewBox="0 0 5 5"><rect x="0.3" y="0.3" width="4.4" height="4.4" rx="0.5" fill="#f6f7fb" stroke="#98a2b8" stroke-width="0.65"/><path d="M1.4 2.5 H3.6" stroke="#34549a" stroke-width="0.8"/><path d="M2.5 1.4 V3.6" stroke="#34549a" stroke-width="0.8"/></svg>
<svg style="left:27.15px;top:424.10px" width="7.8" height="7.8" viewBox="0 0 7.8 7.8"><rect x="0.4" y="0.4" width="7" height="7" fill="#fff" stroke="#666" stroke-width="0.8"/><path d="M1.7 4 L3.2 5.6 L6.2 2" stroke="#111" stroke-width="1.25" fill="none"/></svg>
<svg style="left:36.65px;top:424.70px" width="8.2" height="6.4" viewBox="0 0 8.2 6.4"><defs><linearGradient id="mg29" x1="0" y1="0" x2="1" y2="1"><stop offset="0" stop-color="#6fa0e6"/><stop offset="0.5" stop-color="#3a6cc4"/><stop offset="1" stop-color="#1c4aa0"/></linearGradient></defs><rect x="0" y="0" width="8.2" height="6.4" fill="url(#mg29)"/><path d="M0 2.1 H8.2 M0 4.3 H8.2 M2.7 0 V6.4 M5.5 0 V6.4" stroke="#a8c4f0" stroke-opacity="0.45" stroke-width="0.45"/></svg>
<span class="t" style="left:48.75px;top:424.14px;font-size:6.6px;line-height:7.92px;color:#0a0a0a;transform:scaleX(0.9944);-webkit-text-stroke:0.12px #0a0a0a;">On Surfaces</span>
<svg style="left:27.15px;top:434.60px" width="7.8" height="7.8" viewBox="0 0 7.8 7.8"><rect x="0.4" y="0.4" width="7" height="7" fill="#fff" stroke="#666" stroke-width="0.8"/><rect x="1.3" y="1.3" width="5.2" height="5.2" fill="#e9ebf0"/><rect x="2.4" y="2.4" width="3" height="3" fill="#f6f7f9"/></svg>
<svg style="left:36.65px;top:435.20px" width="8.2" height="6.4" viewBox="0 0 8.2 6.4"><defs><linearGradient id="mg30" x1="0" y1="0" x2="1" y2="1"><stop offset="0" stop-color="#6fa0e6"/><stop offset="0.5" stop-color="#3a6cc4"/><stop offset="1" stop-color="#1c4aa0"/></linearGradient></defs><rect x="0" y="0" width="8.2" height="6.4" fill="url(#mg30)"/><path d="M0 2.1 H8.2 M0 4.3 H8.2 M2.7 0 V6.4 M5.5 0 V6.4" stroke="#a8c4f0" stroke-opacity="0.45" stroke-width="0.45"/></svg>
<span class="t" style="left:48.75px;top:434.64px;font-size:6.6px;line-height:7.92px;color:#0a0a0a;transform:scaleX(0.9909);-webkit-text-stroke:0.12px #0a0a0a;">On Surface Results</span>
<svg style="left:17.25px;top:446.30px" width="5.4" height="5.4" viewBox="0 0 5 5"><rect x="0.3" y="0.3" width="4.4" height="4.4" rx="0.5" fill="#f6f7fb" stroke="#98a2b8" stroke-width="0.65"/><path d="M1.4 2.5 H3.6" stroke="#34549a" stroke-width="0.8"/><path d="M2.5 1.4 V3.6" stroke="#34549a" stroke-width="0.8"/></svg>
<svg style="left:27.15px;top:445.10px" width="7.8" height="7.8" viewBox="0 0 7.8 7.8"><rect x="0.4" y="0.4" width="7" height="7" fill="#fff" stroke="#666" stroke-width="0.8"/><rect x="1.3" y="1.3" width="5.2" height="5.2" fill="#e9ebf0"/><rect x="2.4" y="2.4" width="3" height="3" fill="#f6f7f9"/></svg>
<svg style="left:36.65px;top:445.70px" width="8.2" height="6.4" viewBox="0 0 8.2 6.4"><defs><linearGradient id="mg31" x1="0" y1="0" x2="1" y2="1"><stop offset="0" stop-color="#6fa0e6"/><stop offset="0.5" stop-color="#3a6cc4"/><stop offset="1" stop-color="#1c4aa0"/></linearGradient></defs><rect x="0" y="0" width="8.2" height="6.4" fill="url(#mg31)"/><path d="M0 2.1 H8.2 M0 4.3 H8.2 M2.7 0 V6.4 M5.5 0 V6.4" stroke="#a8c4f0" stroke-opacity="0.45" stroke-width="0.45"/></svg>
<span class="t" style="left:48.75px;top:445.14px;font-size:6.6px;line-height:7.92px;color:#0a0a0a;transform:scaleX(0.9902);-webkit-text-stroke:0.12px #0a0a0a;">In Solids</span>
<svg style="left:17.25px;top:456.80px" width="5.4" height="5.4" viewBox="0 0 5 5"><rect x="0.3" y="0.3" width="4.4" height="4.4" rx="0.5" fill="#f6f7fb" stroke="#98a2b8" stroke-width="0.65"/><path d="M1.4 2.5 H3.6" stroke="#34549a" stroke-width="0.8"/><path d="M2.5 1.4 V3.6" stroke="#34549a" stroke-width="0.8"/></svg>
<svg style="left:27.15px;top:455.60px" width="7.8" height="7.8" viewBox="0 0 7.8 7.8"><rect x="0.4" y="0.4" width="7" height="7" fill="#fff" stroke="#666" stroke-width="0.8"/><rect x="1.3" y="1.3" width="5.2" height="5.2" fill="#e9ebf0"/><rect x="2.4" y="2.4" width="3" height="3" fill="#f6f7f9"/></svg>
<svg style="left:36.65px;top:456.20px" width="8.2" height="6.4" viewBox="0 0 8.2 6.4"><defs><linearGradient id="mg32" x1="0" y1="0" x2="1" y2="1"><stop offset="0" stop-color="#6fa0e6"/><stop offset="0.5" stop-color="#3a6cc4"/><stop offset="1" stop-color="#1c4aa0"/></linearGradient></defs><rect x="0" y="0" width="8.2" height="6.4" fill="url(#mg32)"/><path d="M0 2.1 H8.2 M0 4.3 H8.2 M2.7 0 V6.4 M5.5 0 V6.4" stroke="#a8c4f0" stroke-opacity="0.45" stroke-width="0.45"/></svg>
<span class="t" style="left:48.75px;top:455.64px;font-size:6.6px;line-height:7.92px;color:#0a0a0a;transform:scaleX(1.0459);-webkit-text-stroke:0.12px #0a0a0a;">Mesh Quality</span>
<svg style="left:6.20px;top:467.30px" width="5.4" height="5.4" viewBox="0 0 5 5"><rect x="0.3" y="0.3" width="4.4" height="4.4" rx="0.5" fill="#f6f7fb" stroke="#98a2b8" stroke-width="0.65"/><path d="M1.4 2.5 H3.6" stroke="#34549a" stroke-width="0.8"/></svg>
<svg style="left:16.10px;top:466.10px" width="7.8" height="7.8" viewBox="0 0 7.8 7.8"><rect x="0.4" y="0.4" width="7" height="7" fill="#fff" stroke="#666" stroke-width="0.8"/><rect x="2" y="2" width="3.8" height="3.8" fill="#8a8a8a"/></svg>
<svg style="left:25.30px;top:465.80px" width="10" height="9" viewBox="0 0 10 9"><path d="M1.6 4.3 L9 1.5" stroke="#9cc0ee" stroke-width="1.6"/><path d="M2.2 3.4 L9.2 0.8" stroke="#3a6ad0" stroke-width="0.5"/><path d="M0.4 4.9 L5.8 3.7" stroke="#101014" stroke-width="1.2"/><path d="M2.7 7.4 L7.5 5.8" stroke="#808088" stroke-width="0.8"/><path d="M0 8.5 L2.9 7.3" stroke="#2030d0" stroke-width="1.2"/><path d="M7.3 5.9 L9.8 5" stroke="#e01010" stroke-width="1.3"/></svg>
<span class="t" style="left:37.70px;top:466.14px;font-size:6.6px;line-height:7.92px;color:#0a0a0a;-webkit-text-stroke:0.12px #0a0a0a;">Sections</span>
<svg style="left:27.15px;top:476.60px" width="7.8" height="7.8" viewBox="0 0 7.8 7.8"><rect x="0.4" y="0.4" width="7" height="7" fill="#fff" stroke="#666" stroke-width="0.8"/><path d="M1.7 4 L3.2 5.6 L6.2 2" stroke="#111" stroke-width="1.25" fill="none"/></svg>
<svg style="left:36.35px;top:476.30px" width="10" height="9" viewBox="0 0 10 9"><path d="M1.6 4.3 L9 1.5" stroke="#9cc0ee" stroke-width="1.6"/><path d="M2.2 3.4 L9.2 0.8" stroke="#3a6ad0" stroke-width="0.5"/><path d="M0.4 4.9 L5.8 3.7" stroke="#101014" stroke-width="1.2"/><path d="M2.7 7.4 L7.5 5.8" stroke="#808088" stroke-width="0.8"/><path d="M0 8.5 L2.9 7.3" stroke="#2030d0" stroke-width="1.2"/><path d="M7.3 5.9 L9.8 5" stroke="#e01010" stroke-width="1.3"/></svg>
<span class="t" style="left:48.75px;top:476.64px;font-size:6.6px;line-height:7.92px;color:#0a0a0a;transform:scaleX(1.0377);-webkit-text-stroke:0.12px #0a0a0a;">Descriptions</span>
<svg style="left:27.15px;top:487.10px" width="7.8" height="7.8" viewBox="0 0 7.8 7.8"><rect x="0.4" y="0.4" width="7" height="7" fill="#fff" stroke="#666" stroke-width="0.8"/><path d="M1.7 4 L3.2 5.6 L6.2 2" stroke="#111" stroke-width="1.25" fill="none"/></svg>
<svg style="left:36.35px;top:486.80px" width="10" height="9" viewBox="0 0 10 9"><path d="M1.6 4.3 L9 1.5" stroke="#9cc0ee" stroke-width="1.6"/><path d="M2.2 3.4 L9.2 0.8" stroke="#3a6ad0" stroke-width="0.5"/><path d="M0.4 4.9 L5.8 3.7" stroke="#101014" stroke-width="1.2"/><path d="M2.7 7.4 L7.5 5.8" stroke="#808088" stroke-width="0.8"/><path d="M0 8.5 L2.9 7.3" stroke="#2030d0" stroke-width="1.2"/><path d="M7.3 5.9 L9.8 5" stroke="#e01010" stroke-width="1.3"/></svg>
<span class="t" style="left:48.75px;top:487.14px;font-size:6.6px;line-height:7.92px;color:#0a0a0a;transform:scaleX(1.0441);-webkit-text-stroke:0.12px #0a0a0a;">Draw in Foreground</span>
<svg style="left:27.15px;top:497.60px" width="7.8" height="7.8" viewBox="0 0 7.8 7.8"><rect x="0.4" y="0.4" width="7" height="7" fill="#fff" stroke="#666" stroke-width="0.8"/><rect x="1.3" y="1.3" width="5.2" height="5.2" fill="#e9ebf0"/><rect x="2.4" y="2.4" width="3" height="3" fill="#f6f7f9"/></svg>
<svg style="left:36.35px;top:497.30px" width="10" height="9" viewBox="0 0 10 9"><path d="M1.6 4.3 L9 1.5" stroke="#9cc0ee" stroke-width="1.6"/><path d="M2.2 3.4 L9.2 0.8" stroke="#3a6ad0" stroke-width="0.5"/><path d="M0.4 4.9 L5.8 3.7" stroke="#101014" stroke-width="1.2"/><path d="M2.7 7.4 L7.5 5.8" stroke="#808088" stroke-width="0.8"/><path d="M0 8.5 L2.9 7.3" stroke="#2030d0" stroke-width="1.2"/><path d="M7.3 5.9 L9.8 5" stroke="#e01010" stroke-width="1.3"/></svg>
<span class="t" style="left:48.75px;top:497.64px;font-size:6.6px;line-height:7.92px;color:#0a0a0a;transform:scaleX(1.0124);-webkit-text-stroke:0.12px #0a0a0a;">Result Diagrams Filled</span>
<svg style="left:27.15px;top:508.10px" width="7.8" height="7.8" viewBox="0 0 7.8 7.8"><rect x="0.4" y="0.4" width="7" height="7" fill="#fff" stroke="#666" stroke-width="0.8"/><path d="M1.7 4 L3.2 5.6 L6.2 2" stroke="#111" stroke-width="1.25" fill="none"/></svg>
<svg style="left:36.35px;top:507.80px" width="10" height="9" viewBox="0 0 10 9"><path d="M1.6 4.3 L9 1.5" stroke="#9cc0ee" stroke-width="1.6"/><path d="M2.2 3.4 L9.2 0.8" stroke="#3a6ad0" stroke-width="0.5"/><path d="M0.4 4.9 L5.8 3.7" stroke="#101014" stroke-width="1.2"/><path d="M2.7 7.4 L7.5 5.8" stroke="#808088" stroke-width="0.8"/><path d="M0 8.5 L2.9 7.3" stroke="#2030d0" stroke-width="1.2"/><path d="M7.3 5.9 L9.8 5" stroke="#e01010" stroke-width="1.3"/></svg>
<span class="t" style="left:48.75px;top:508.14px;font-size:6.6px;line-height:7.92px;color:#0a0a0a;transform:scaleX(1.0737);-webkit-text-stroke:0.12px #0a0a0a;">Hatching</span>
<svg style="left:27.15px;top:518.60px" width="7.8" height="7.8" viewBox="0 0 7.8 7.8"><rect x="0.4" y="0.4" width="7" height="7" fill="#fff" stroke="#666" stroke-width="0.8"/><rect x="1.3" y="1.3" width="5.2" height="5.2" fill="#e9ebf0"/><rect x="2.4" y="2.4" width="3" height="3" fill="#f6f7f9"/></svg>
<svg style="left:36.35px;top:518.30px" width="10" height="9" viewBox="0 0 10 9"><path d="M1.6 4.3 L9 1.5" stroke="#9cc0ee" stroke-width="1.6"/><path d="M2.2 3.4 L9.2 0.8" stroke="#3a6ad0" stroke-width="0.5"/><path d="M0.4 4.9 L5.8 3.7" stroke="#101014" stroke-width="1.2"/><path d="M2.7 7.4 L7.5 5.8" stroke="#808088" stroke-width="0.8"/><path d="M0 8.5 L2.9 7.3" stroke="#2030d0" stroke-width="1.2"/><path d="M7.3 5.9 L9.8 5" stroke="#e01010" stroke-width="1.3"/></svg>
<span class="t" style="left:48.75px;top:518.64px;font-size:6.6px;line-height:7.92px;color:#0a0a0a;transform:scaleX(1.0141);-webkit-text-stroke:0.12px #0a0a0a;">All Values</span>
<svg style="left:0;top:0" width="200" height="570" viewBox="0 0 200 570"><rect x="36.2" y="296.3" width="144.7" height="43" fill="none" stroke="#c4101c" stroke-width="1.6"/></svg>
<span class="t" style="left:199.90px;top:109.00px;font-size:6.5px;line-height:7.80px;color:#1a1a1a;transform:scaleX(0.9722);">Support Reactions [kN/m]</span>
<span class="t" style="left:199.90px;top:117.20px;font-size:6.5px;line-height:7.80px;color:#1a1a1a;transform:scaleX(0.9544);">RC1 : G/p or Gq/p</span>
<svg style="left:0;top:0;will-change:transform" width="760" height="570" viewBox="0 0 760 570"><path d="M282.10 195.50 L736.30 209.70 L672.20 311.40 L217.80 296.80 Z" fill="#7575c8"/><path d="M310.49 196.39 L246.20 297.71 M278.08 201.83 L732.29 216.06 M338.88 197.28 L274.60 298.62 M274.06 208.16 L728.29 222.41 M367.26 198.16 L303.00 299.54 M270.04 214.49 L724.28 228.77 M395.65 199.05 L331.40 300.45 M266.03 220.82 L720.27 235.12 M424.04 199.94 L359.80 301.36 M262.01 227.16 L716.27 241.48 M452.43 200.82 L388.20 302.27 M257.99 233.49 L712.26 247.84 M480.81 201.71 L416.60 303.19 M253.97 239.82 L708.26 254.19 M509.20 202.60 L445.00 304.10 M249.95 246.15 L704.25 260.55 M537.59 203.49 L473.40 305.01 M245.93 252.48 L700.24 266.91 M565.97 204.38 L501.80 305.93 M241.91 258.81 L696.24 273.26 M594.36 205.26 L530.20 306.84 M237.89 265.14 L692.23 279.62 M622.75 206.15 L558.60 307.75 M233.88 271.48 L688.23 285.97 M651.14 207.04 L587.00 308.66 M229.86 277.81 L684.22 292.33 M679.52 207.92 L615.40 309.57 M225.84 284.14 L680.21 298.69 M707.91 208.81 L643.80 310.49 M221.82 290.47 L676.21 305.04 " stroke="#9090c6" stroke-width="0.6" fill="none"/><rect x="321.12" y="198.12" width="12.2" height="2.7" fill="#5c84b6"/><rect x="321.72" y="195.32" width="11.8" height="2.9" rx="0.7" fill="#1fdc1f"/><rect x="256.94" y="297.36" width="12.6" height="5.3" rx="0.9" fill="#20e020"/><rect x="258.04" y="300.36" width="9.6" height="1" fill="#62ee62"/><rect x="257.84" y="297.66" width="11" height="1.4" fill="#10bc10"/><rect x="411.96" y="200.96" width="12.2" height="2.7" fill="#5c84b6"/><rect x="412.56" y="198.16" width="11.8" height="2.9" rx="0.7" fill="#1fdc1f"/><rect x="347.82" y="300.28" width="12.6" height="5.3" rx="0.9" fill="#20e020"/><rect x="348.92" y="303.28" width="9.6" height="1" fill="#62ee62"/><rect x="348.72" y="300.58" width="11" height="1.4" fill="#10bc10"/><rect x="502.80" y="203.80" width="12.2" height="2.7" fill="#5c84b6"/><rect x="503.40" y="201.00" width="11.8" height="2.9" rx="0.7" fill="#1fdc1f"/><rect x="438.70" y="303.20" width="12.6" height="5.3" rx="0.9" fill="#20e020"/><rect x="439.80" y="306.20" width="9.6" height="1" fill="#62ee62"/><rect x="439.60" y="303.50" width="11" height="1.4" fill="#10bc10"/><rect x="593.64" y="206.64" width="12.2" height="2.7" fill="#5c84b6"/><rect x="594.24" y="203.84" width="11.8" height="2.9" rx="0.7" fill="#1fdc1f"/><rect x="529.58" y="306.12" width="12.6" height="5.3" rx="0.9" fill="#20e020"/><rect x="530.68" y="309.12" width="9.6" height="1" fill="#62ee62"/><rect x="530.48" y="306.42" width="11" height="1.4" fill="#10bc10"/><rect x="684.48" y="209.48" width="12.2" height="2.7" fill="#5c84b6"/><rect x="685.08" y="206.68" width="11.8" height="2.9" rx="0.7" fill="#1fdc1f"/><rect x="620.46" y="309.04" width="12.6" height="5.3" rx="0.9" fill="#20e020"/><rect x="621.56" y="312.04" width="9.6" height="1" fill="#62ee62"/><rect x="621.36" y="309.34" width="11" height="1.4" fill="#10bc10"/><path d="M282.10 195.50 L736.30 209.70 M217.80 296.80 L672.20 311.40" stroke="#20e620" stroke-width="1.1" fill="none"/><path d="M282.10 195.50 L217.80 296.80 M736.30 209.70 L672.20 311.40" stroke="#26262e" stroke-width="0.9" fill="none"/><rect x="280.80" y="194.20" width="2.6" height="2.6" fill="#8a0a12"/><rect x="735.00" y="208.40" width="2.6" height="2.6" fill="#8a0a12"/><rect x="670.90" y="310.10" width="2.6" height="2.6" fill="#8a0a12"/><rect x="216.50" y="295.50" width="2.6" height="2.6" fill="#8a0a12"/><path d="M217.5 331.00 L672.2 344.80 L672.2 396.30 L217.5 382.20 Z" fill="rgba(60,230,60,0.10)"/><path d="M217.5 331.00 L672.2 344.80 L672.2 408.00 L416.5 400.30 L387.7 395.30 L217.5 337.00 Z" fill="rgba(60,230,60,0.10)"/><path d="M217.5 331.00 L672.2 344.80 M217.5 382.20 L672.2 396.30 M217.5 337.00 L387.7 395.30 L416.5 400.30 L672.2 408.00 M217.50 331.00 V382.20 M245.92 331.86 V383.08 M274.34 332.73 V383.96 M302.76 333.59 V384.84 M331.18 334.45 V385.73 M359.59 335.31 V386.61 M388.01 336.18 V395.35 M416.43 337.04 V400.29 M444.85 337.90 V401.15 M473.27 338.76 V402.01 M501.69 339.62 V402.87 M530.11 340.49 V403.72 M558.53 341.35 V404.58 M586.94 342.21 V405.43 M615.36 343.07 V406.29 M643.78 343.94 V407.14 M672.20 344.80 V408.00 " stroke="#3ae83a" stroke-opacity="0.9" stroke-width="1.05" fill="none"/><path d="M217.50 331.20 l1.8 4.3 h-3.6 z M245.92 332.06 l1.8 4.3 h-3.6 z M274.34 332.93 l1.8 4.3 h-3.6 z M302.76 333.79 l1.8 4.3 h-3.6 z M331.18 334.65 l1.8 4.3 h-3.6 z M359.59 335.51 l1.8 4.3 h-3.6 z M388.01 336.38 l1.8 4.3 h-3.6 z M416.43 337.24 l1.8 4.3 h-3.6 z M444.85 338.10 l1.8 4.3 h-3.6 z M473.27 338.96 l1.8 4.3 h-3.6 z M501.69 339.82 l1.8 4.3 h-3.6 z M530.11 340.69 l1.8 4.3 h-3.6 z M558.53 341.55 l1.8 4.3 h-3.6 z M586.94 342.41 l1.8 4.3 h-3.6 z M615.36 343.27 l1.8 4.3 h-3.6 z M643.78 344.14 l1.8 4.3 h-3.6 z M672.20 345.00 l1.8 4.3 h-3.6 z " fill="#22e222"/><text x="218" y="345.8" font-family="Liberation Sans,sans-serif" font-size="5" fill="#24cc24" text-anchor="middle">0.21</text><text x="417" y="408.8" font-family="Liberation Sans,sans-serif" font-size="5" fill="#24cc24" text-anchor="middle">4.00</text><text x="445" y="397.5" font-family="Liberation Sans,sans-serif" font-size="5" fill="#24cc24" text-anchor="middle">3.21</text></svg>
</body></html>
